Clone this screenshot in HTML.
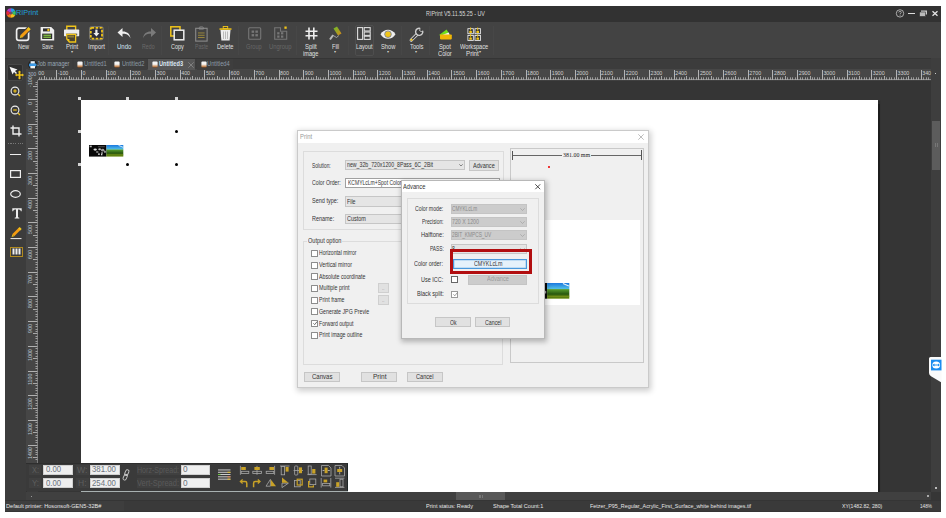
<!DOCTYPE html><html><head><meta charset="utf-8"><style>
html,body{margin:0;padding:0;}
body{width:946px;height:518px;overflow:hidden;background:#fff;position:relative;font-family:"Liberation Sans",sans-serif;}
.t{position:absolute;white-space:nowrap;line-height:1;transform-origin:0 0;}
div{box-sizing:border-box;}
svg{position:absolute;overflow:visible;}
</style></head><body>
<div style="position:absolute;left:5px;top:6px;width:936px;height:506px;background:#3b3b3b;"></div>
<div style="position:absolute;left:5px;top:6px;width:936px;height:15.5px;background:#323232;"></div>
<div style="position:absolute;left:5px;top:21.5px;width:936px;height:37px;background:#434343;"></div>
<div style="position:absolute;left:5px;top:58px;width:936px;height:1px;background:#353535;"></div>
<div style="position:absolute;left:5px;top:59px;width:936px;height:10.3px;background:#3c3c3c;"></div>
<div style="position:absolute;left:5px;top:59px;width:21px;height:441px;background:#3c3c3c;"></div>
<div style="position:absolute;left:25.5px;top:69px;width:1px;height:423px;background:#333;"></div>
<div style="position:absolute;left:38px;top:80px;width:893px;height:412px;background:#353535;"></div>
<div style="position:absolute;left:26px;top:69.3px;width:906px;height:10.7px;background:#474747;"></div>
<div style="position:absolute;left:26.3px;top:69.3px;width:11.7px;height:394px;background:#464646;"></div>
<div style="position:absolute;left:81px;top:100px;width:796.6px;height:392px;background:#fff;box-shadow:1.5px 1px 1px #1c1c1c;"></div>
<div style="position:absolute;left:931px;top:58px;width:10px;height:442px;background:#3e3e3e;"></div>
<div style="position:absolute;left:932px;top:121px;width:8px;height:49px;background:#5c5c5c;"></div>
<div style="position:absolute;left:26px;top:492px;width:905px;height:8px;background:#404040;"></div>
<div style="position:absolute;left:456px;top:492px;width:49px;height:8px;background:#585858;"></div>
<div style="position:absolute;left:478.6px;top:494.6px;width:0.8px;height:3.6px;background:#777;"></div>
<div style="position:absolute;left:480.4px;top:494.6px;width:0.8px;height:3.6px;background:#777;"></div>
<div style="position:absolute;left:482.2px;top:494.6px;width:0.8px;height:3.6px;background:#777;"></div>
<div style="position:absolute;left:5px;top:500px;width:936px;height:11.6px;background:#3a3a3a;border-top:1px solid #353535;border-bottom:1px solid #353535;"></div>
<div style="position:absolute;left:5px;top:501px;width:119px;height:9.6px;background:#3e3e3e;"></div>
<svg style="left:5.5px;top:7.8px" width="10" height="10" viewBox="0 0 10 10"><g transform="translate(5 5)">
<path d="M0 0 L0 -4.8 A4.8 4.8 0 0 1 4.16 -2.4 Z" fill="#2d9be8"/>
<path d="M0 0 L4.16 -2.4 A4.8 4.8 0 0 1 4.16 2.4 Z" fill="#37c06a"/>
<path d="M0 0 L4.16 2.4 A4.8 4.8 0 0 1 0 4.8 Z" fill="#f4c21b"/>
<path d="M0 0 L0 4.8 A4.8 4.8 0 0 1 -4.16 2.4 Z" fill="#f07a1a"/>
<path d="M0 0 L-4.16 2.4 A4.8 4.8 0 0 1 -4.16 -2.4 Z" fill="#e8283c"/>
<path d="M0 0 L-4.16 -2.4 A4.8 4.8 0 0 1 0 -4.8 Z" fill="#b43cc8"/>
<circle r="1.5" fill="#6a4a6a"/></g></svg>
<div class="t" style="left:16.30px;top:10.09px;font-size:6.55px;color:#22a0dc;font-weight:normal;font-family:'Liberation Sans',sans-serif;transform:scaleX(1.114);">RIPrint</div>
<div class="t" style="left:426.00px;top:9.67px;font-size:7.01px;color:#d8d8d8;font-weight:normal;font-family:'Liberation Sans',sans-serif;transform:scaleX(0.770);">RIPrint V5.11.55.25 - UV</div>
<svg style="left:895px;top:9px" width="10" height="10" viewBox="0 0 10 10"><circle cx="5" cy="4.4" r="3.7" fill="none" stroke="#c8c8c8" stroke-width="0.8"/><path d="M3.7 3.5 Q3.8 2.3 5 2.3 Q6.3 2.3 6.3 3.4 Q6.3 4.2 5.1 4.7 V5.4" fill="none" stroke="#c8c8c8" stroke-width="0.7"/><rect x="4.7" y="5.9" width="0.8" height="0.8" fill="#c8c8c8"/></svg>
<div style="position:absolute;left:908.2px;top:13px;width:7.2px;height:1.4px;background:#ddd;"></div>
<svg style="left:919px;top:10px" width="9" height="7" viewBox="0 0 9 7"><rect x="2" y="0.5" width="6" height="4" fill="#ccc"/><rect x="0.5" y="2" width="6" height="4.5" fill="#bbb" stroke="#2c2c2c" stroke-width="0.6"/></svg>
<svg style="left:932px;top:11px" width="6" height="5" viewBox="0 0 6 5"><path d="M0.5 0.3 L5.5 4.7 M5.5 0.3 L0.5 4.7" stroke="#e6e6e6" stroke-width="1.3"/></svg>
<div style="position:absolute;left:107.5px;top:26px;width:1px;height:29px;background:#474747;"></div>
<div style="position:absolute;left:160.5px;top:26px;width:1px;height:29px;background:#474747;"></div>
<div style="position:absolute;left:237.5px;top:26px;width:1px;height:29px;background:#474747;"></div>
<div style="position:absolute;left:295.5px;top:26px;width:1px;height:29px;background:#474747;"></div>
<div style="position:absolute;left:347.5px;top:26px;width:1px;height:29px;background:#474747;"></div>
<div style="position:absolute;left:400.5px;top:26px;width:1px;height:29px;background:#474747;"></div>
<div style="position:absolute;left:428.5px;top:26px;width:1px;height:29px;background:#474747;"></div>
<div style="position:absolute;left:492.5px;top:26px;width:1px;height:29px;background:#474747;"></div>
<svg style="left:15px;top:26px" width="17" height="16" viewBox="0 0 17 16"><rect x="1.6" y="2.2" width="12" height="12.2" rx="2.4" fill="#3a3a3a" stroke="#eeeeee" stroke-width="1.7"/><path d="M6.2 10.6 L14.2 2.6" stroke="#3d3d3d" stroke-width="5"/><path d="M6.4 10.4 L13.6 3.2" stroke="#f39c12" stroke-width="3"/><path d="M12.6 2 L14.8 4.2" stroke="#f0c419" stroke-width="2.6"/><path d="M4.8 12 L5.6 9.2 L7.6 11.2 Z" fill="#f0c419"/></svg>
<div class="t" style="left:17.50px;top:43.07px;font-size:7.01px;color:#e0e0e0;font-weight:normal;font-family:'Liberation Sans',sans-serif;transform:scaleX(0.792);">New</div>
<svg style="left:40px;top:26px" width="15" height="15" viewBox="0 0 15 15"><path d="M0.6 1 H11.2 L14.2 4 V14.6 H0.6 Z" fill="#eeeeee"/><rect x="3" y="2.4" width="7" height="3" fill="#2e2e2e"/><circle cx="8.4" cy="3.9" r="1.2" fill="#f2c21b"/><rect x="2.2" y="7.6" width="10" height="5.4" fill="#2e2e2e"/><rect x="3.4" y="8.6" width="7.6" height="1.5" fill="#7cb342"/><rect x="3.4" y="10.6" width="7.6" height="1.5" fill="#7cb342"/></svg>
<div class="t" style="left:41.60px;top:43.07px;font-size:7.01px;color:#e0e0e0;font-weight:normal;font-family:'Liberation Sans',sans-serif;transform:scaleX(0.707);">Save</div>
<svg style="left:63px;top:25px" width="17" height="18" viewBox="0 0 17 18"><path d="M3.8 5 V1.2 H12.6 V5" fill="none" stroke="#f0c419" stroke-width="1.4"/><rect x="1" y="4.6" width="15.2" height="6.6" rx="0.6" fill="#eeeeee"/><rect x="3.2" y="8.6" width="11" height="1.8" fill="#555"/><path d="M3.8 9.4 H12.6 V17 H6.4 L3.8 14 Z" fill="#4a4430" stroke="#f0c419" stroke-width="1.3"/><path d="M3.8 14 L6.4 17 V14 Z" fill="#f0c419"/><rect x="5" y="10.5" width="6" height="2" fill="#8a7a3a"/></svg>
<div class="t" style="left:65.60px;top:43.07px;font-size:7.01px;color:#e0e0e0;font-weight:normal;font-family:'Liberation Sans',sans-serif;transform:scaleX(0.846);">Print</div>
<div class="t" style="left:70.50px;top:50.25px;font-size:3.95px;color:#ccc;font-weight:normal;font-family:'Liberation Sans',sans-serif;transform:scaleX(1.013);">▾</div>
<svg style="left:88.5px;top:25.8px" width="15" height="14.5" viewBox="0 0 15 14.5"><rect x="0.6" y="0.6" width="13.6" height="13.2" rx="1.8" fill="#3a3a3a" stroke="#9a9a9a" stroke-width="0.6"/><rect x="1.8" y="1.8" width="11.2" height="10.8" rx="0.8" fill="#2c2c3a" stroke="#f0c419" stroke-width="1.8" stroke-dasharray="2.6 1.4"/><path d="M7.4 3.6 V8.2" stroke="#eeeeee" stroke-width="2.2"/><path d="M4.4 7 L7.4 10.4 L10.4 7 Z" fill="#eeeeee"/></svg>
<div class="t" style="left:87.80px;top:43.07px;font-size:7.01px;color:#e0e0e0;font-weight:normal;font-family:'Liberation Sans',sans-serif;transform:scaleX(0.851);">Import</div>
<svg style="left:117px;top:27px" width="15" height="12" viewBox="0 0 15 12"><path d="M13.5 11.5 C13 6 9 4.2 5.5 4.5 V1 L0.5 5.5 L5.5 10 V6.8 C8.5 6.5 12 7.5 13.5 11.5 Z" fill="#eeeeee"/></svg>
<div class="t" style="left:116.70px;top:42.97px;font-size:7.01px;color:#d6e6f5;font-weight:normal;font-family:'Liberation Sans',sans-serif;transform:scaleX(0.859);">Undo</div>
<svg style="left:141.5px;top:27px" width="15" height="12" viewBox="0 0 15 12"><path d="M1 11.5 C1.5 6 5.5 4.2 9 4.5 V1 L14 5.5 L9 10 V6.8 C6 6.5 2.5 7.5 1 11.5 Z" fill="#7a7a7a"/></svg>
<div class="t" style="left:142.10px;top:42.97px;font-size:7.01px;color:#6a6a6a;font-weight:normal;font-family:'Liberation Sans',sans-serif;transform:scaleX(0.752);">Redo</div>
<svg style="left:170px;top:26px" width="15" height="15" viewBox="0 0 15 15"><rect x="0.8" y="0.8" width="9.2" height="9.2" fill="none" stroke="#f0c419" stroke-width="1.5"/><rect x="4.2" y="4.2" width="9.6" height="9.6" fill="#3a3a3a" stroke="#eeeeee" stroke-width="1.5"/></svg>
<div class="t" style="left:170.70px;top:42.97px;font-size:7.01px;color:#e0e0e0;font-weight:normal;font-family:'Liberation Sans',sans-serif;transform:scaleX(0.788);">Copy</div>
<svg style="left:195px;top:26px" width="13" height="16" viewBox="0 0 13 16"><rect x="0.7" y="2.3" width="11.4" height="12.8" fill="none" stroke="#8a8a8a" stroke-width="1.1"/><path d="M4 3 V1.8 C4 0.6 8.6 0.6 8.6 1.8 V3 Z" fill="none" stroke="#8a8a8a" stroke-width="1"/><rect x="3" y="6.5" width="6.6" height="0.9" fill="#a08c3c"/><rect x="3" y="8.8" width="6.6" height="0.9" fill="#a08c3c"/><rect x="3" y="11.1" width="6.6" height="0.9" fill="#a08c3c"/></svg>
<div class="t" style="left:194.60px;top:42.97px;font-size:7.01px;color:#6a6a6a;font-weight:normal;font-family:'Liberation Sans',sans-serif;transform:scaleX(0.736);">Paste</div>
<svg style="left:219px;top:26px" width="13" height="15" viewBox="0 0 13 15"><rect x="0.5" y="2.3" width="12" height="1.5" fill="#f0c419"/><rect x="4.2" y="0.5" width="4.5" height="2" fill="none" stroke="#f0c419" stroke-width="0.9"/><path d="M1.5 4 H11.5 L10.6 14.5 H2.4 Z" fill="#eeeeee"/><path d="M4.5 5.5 V13 M6.5 5.5 V13 M8.5 5.5 V13" stroke="#999" stroke-width="0.6"/></svg>
<div class="t" style="left:217.00px;top:42.97px;font-size:7.01px;color:#e0e0e0;font-weight:normal;font-family:'Liberation Sans',sans-serif;transform:scaleX(0.814);">Delete</div>
<svg style="left:247.5px;top:27px" width="14" height="13" viewBox="0 0 14 13"><rect x="0.7" y="0.7" width="12" height="11.5" rx="1" fill="none" stroke="#777" stroke-width="1.1"/><rect x="3.6" y="3.5" width="2.5" height="2.3" fill="#777"/><rect x="7.4" y="3.5" width="2.5" height="2.3" fill="#777"/><rect x="3.6" y="7.1" width="2.5" height="2.3" fill="#777"/><rect x="7.4" y="7.1" width="2.5" height="2.3" fill="#777"/></svg>
<div class="t" style="left:246.20px;top:42.97px;font-size:7.01px;color:#686868;font-weight:normal;font-family:'Liberation Sans',sans-serif;transform:scaleX(0.806);">Group</div>
<svg style="left:273.5px;top:26px" width="14" height="14" viewBox="0 0 14 14"><path d="M0.7 1.7 H6.5 V5.2 H12.7 V13.2 H0.7 Z" fill="none" stroke="#777" stroke-width="1.1"/><rect x="10.4" y="0.5" width="2.3" height="2.3" fill="#f0c419"/><rect x="3.2" y="6.2" width="2.3" height="2.2" fill="#777"/><rect x="7" y="6.2" width="2.3" height="2.2" fill="#777"/><rect x="3.2" y="9.5" width="2.3" height="2.2" fill="#777"/><rect x="7" y="9.5" width="2.3" height="2.2" fill="#777"/></svg>
<div class="t" style="left:269.20px;top:42.97px;font-size:7.01px;color:#686868;font-weight:normal;font-family:'Liberation Sans',sans-serif;transform:scaleX(0.841);">Ungroup</div>
<svg style="left:304.5px;top:27px" width="13" height="13" viewBox="0 0 13 13"><path d="M4 0.5 V12.5 M8.8 0.5 V12.5 M0.5 4.2 H12.5 M0.5 8.8 H12.5" stroke="#eeeeee" stroke-width="1.6"/></svg>
<div class="t" style="left:304.90px;top:42.77px;font-size:7.01px;color:#e0e0e0;font-weight:normal;font-family:'Liberation Sans',sans-serif;transform:scaleX(0.858);">Split</div>
<div class="t" style="left:302.80px;top:49.97px;font-size:7.01px;color:#e0e0e0;font-weight:normal;font-family:'Liberation Sans',sans-serif;transform:scaleX(0.807);">image</div>
<svg style="left:329px;top:26px" width="13" height="15" viewBox="0 0 13 15"><defs><linearGradient id="fg" x1="0" y1="0" x2="1" y2="1"><stop offset="0" stop-color="#6abf2a"/><stop offset="1" stop-color="#d9861a"/></linearGradient></defs><path d="M4.5 2.5 L8 0.5 L12.5 7.5 L9 9.5 Z" fill="url(#fg)"/><path d="M9.8 9.6 L7.5 11.5 L3.5 9" stroke="#aaa" stroke-width="0.9" fill="none"/><path d="M4 9.2 L1 13.5" stroke="#bbb" stroke-width="2"/></svg>
<div class="t" style="left:331.70px;top:42.77px;font-size:7.01px;color:#e0e0e0;font-weight:normal;font-family:'Liberation Sans',sans-serif;transform:scaleX(0.793);">Fill</div>
<div class="t" style="left:333.50px;top:50.45px;font-size:3.95px;color:#ccc;font-weight:normal;font-family:'Liberation Sans',sans-serif;transform:scaleX(1.013);">▾</div>
<div style="position:absolute;left:354.5px;top:25px;width:19.5px;height:30.5px;border:1px solid #4e4e4e;border-radius:2px;"></div>
<svg style="left:357px;top:27px" width="14" height="13" viewBox="0 0 14 13"><rect x="0.6" y="0.6" width="5" height="11.8" fill="none" stroke="#ddd" stroke-width="1.1"/><rect x="7.2" y="0.6" width="6" height="3.4" fill="none" stroke="#ddd" stroke-width="1.1"/><rect x="7.2" y="5" width="6" height="3.4" fill="none" stroke="#ddd" stroke-width="1.1"/><rect x="7.2" y="9.2" width="6" height="3.2" fill="none" stroke="#ddd" stroke-width="1.1"/></svg>
<div class="t" style="left:356.00px;top:42.87px;font-size:7.01px;color:#e0e0e0;font-weight:normal;font-family:'Liberation Sans',sans-serif;transform:scaleX(0.784);">Layout</div>
<svg style="left:380px;top:28.5px" width="16" height="10.5" viewBox="0 0 16 10.5"><path d="M0.5 5.2 C4 -0.8 12 -0.8 15.5 5.2 C12 11.2 4 11.2 0.5 5.2 Z" fill="#eeeeee"/><circle cx="8" cy="5.2" r="2.8" fill="#f0c419"/><circle cx="8" cy="5.2" r="3.3" fill="none" stroke="#444" stroke-width="0.6"/></svg>
<div class="t" style="left:380.90px;top:42.87px;font-size:7.01px;color:#e0e0e0;font-weight:normal;font-family:'Liberation Sans',sans-serif;transform:scaleX(0.816);">Show</div>
<div class="t" style="left:386.50px;top:50.45px;font-size:3.95px;color:#ccc;font-weight:normal;font-family:'Liberation Sans',sans-serif;transform:scaleX(1.013);">▾</div>
<svg style="left:409px;top:26.5px" width="15" height="15" viewBox="0 0 15 15"><path d="M2.2 13.2 L8.4 7" stroke="#cfcfcf" stroke-width="3.2" stroke-linecap="round"/><path d="M2.2 13.2 L8.4 7" stroke="#3a3a3a" stroke-width="1.4" stroke-linecap="round"/><path d="M13.68 3.87 A3.6 3.6 0 1 1 11.13 1.32" fill="#3a3a3a" stroke="#cfcfcf" stroke-width="1.4"/><path d="M11.13 1.32 L10.6 3.6 L12.2 4.6 L13.68 3.87" fill="#3a3a3a" stroke="#cfcfcf" stroke-width="0.9"/><circle cx="2.6" cy="12.8" r="1.1" fill="#f0c419"/></svg>
<div class="t" style="left:409.50px;top:42.87px;font-size:7.01px;color:#e0e0e0;font-weight:normal;font-family:'Liberation Sans',sans-serif;transform:scaleX(0.825);">Tools</div>
<div class="t" style="left:414.50px;top:50.45px;font-size:3.95px;color:#ccc;font-weight:normal;font-family:'Liberation Sans',sans-serif;transform:scaleX(1.013);">▾</div>
<svg style="left:438px;top:27.5px" width="14" height="12" viewBox="0 0 14 12"><path d="M0.8 7.2 L8.6 1.6 L11.4 6 Z" fill="#72e01a"/><path d="M1.6 8 L10.8 4.4 L12 8 Z" fill="#f6f6f6"/><rect x="2" y="6.4" width="11.8" height="5" rx="0.8" fill="#f2b705"/></svg>
<div class="t" style="left:438.80px;top:42.87px;font-size:7.01px;color:#e0e0e0;font-weight:normal;font-family:'Liberation Sans',sans-serif;transform:scaleX(0.825);">Spot</div>
<div class="t" style="left:438.00px;top:49.97px;font-size:7.01px;color:#e0e0e0;font-weight:normal;font-family:'Liberation Sans',sans-serif;transform:scaleX(0.824);">Color</div>
<svg style="left:466.6px;top:26.8px" width="14" height="14" viewBox="0 0 14 14"><rect x="0.9" y="1.7" width="5.4" height="5" fill="#2e2e2e" stroke="#eee" stroke-width="0.9"/><path d="M2.3 6.1 V4.1 Q3.6 2.9 4.9 4.1 V6.1 Z" fill="#f0c419"/><rect x="3.1" y="0.5" width="1" height="2.6" fill="#f0c419"/><rect x="8.0" y="1.7" width="5.4" height="5" fill="#2e2e2e" stroke="#eee" stroke-width="0.9"/><path d="M9.4 6.1 V4.1 Q10.7 2.9 12.0 4.1 V6.1 Z" fill="#f0c419"/><rect x="10.2" y="0.5" width="1" height="2.6" fill="#f0c419"/><rect x="0.9" y="8.4" width="5.4" height="5" fill="#2e2e2e" stroke="#eee" stroke-width="0.9"/><path d="M2.3 12.8 V10.8 Q3.6 9.6 4.9 10.8 V12.8 Z" fill="#f0c419"/><rect x="3.1" y="7.2" width="1" height="2.6" fill="#f0c419"/><rect x="8.0" y="8.4" width="5.4" height="5" fill="#2e2e2e" stroke="#eee" stroke-width="0.9"/><path d="M9.4 12.8 V10.8 Q10.7 9.6 12.0 10.8 V12.8 Z" fill="#f0c419"/><rect x="10.2" y="7.2" width="1" height="2.6" fill="#f0c419"/></svg>
<div class="t" style="left:459.70px;top:42.87px;font-size:7.01px;color:#e0e0e0;font-weight:normal;font-family:'Liberation Sans',sans-serif;transform:scaleX(0.810);">Workspace</div>
<div class="t" style="left:465.70px;top:49.97px;font-size:7.01px;color:#e0e0e0;font-weight:normal;font-family:'Liberation Sans',sans-serif;transform:scaleX(0.888);">Print</div>
<div class="t" style="left:479.00px;top:50.45px;font-size:3.95px;color:#ccc;font-weight:normal;font-family:'Liberation Sans',sans-serif;transform:scaleX(1.013);">▾</div>
<div style="position:absolute;left:27.5px;top:59px;width:44px;height:10.5px;background:#3e3e3e;"></div>
<svg style="left:28px;top:59.5px" width="9.5" height="9.5" viewBox="0 0 9.5 9.5"><circle cx="4.7" cy="4.7" r="4.6" fill="#222"/><rect x="2.6" y="1.2" width="4.2" height="2.6" fill="#e8f0f8"/><rect x="1" y="3.4" width="7.4" height="3.2" rx="0.8" fill="#3a9ae8"/><rect x="2.4" y="6" width="4.6" height="2.4" fill="#f4f4f4"/></svg>
<div class="t" style="left:37.30px;top:61.08px;font-size:6.78px;color:#9aa8b4;font-weight:normal;font-family:'Liberation Sans',sans-serif;transform:scaleX(0.821);">Job manager</div>
<div style="position:absolute;left:74px;top:59px;width:35.6px;height:10.5px;background:#3e3e3e;"></div>
<svg style="left:76.5px;top:61px" width="6" height="7" viewBox="0 0 6 7"><defs><linearGradient id="tg" x1="0" y1="0" x2="0" y2="1"><stop offset="0.45" stop-color="#f4f4f4"/><stop offset="0.75" stop-color="#d8a070"/><stop offset="1" stop-color="#8a4a1a"/></linearGradient></defs><rect x="0.4" y="0.4" width="5.2" height="6.2" rx="1" fill="url(#tg)"/></svg>
<div class="t" style="left:83.80px;top:61.08px;font-size:6.78px;color:#8d9aa5;font-weight:normal;font-family:'Liberation Sans',sans-serif;transform:scaleX(0.852);">Untitled1</div>
<div style="position:absolute;left:111.9px;top:59px;width:35px;height:10.5px;background:#3e3e3e;"></div>
<svg style="left:114px;top:61px" width="6" height="7" viewBox="0 0 6 7"><defs><linearGradient id="tg" x1="0" y1="0" x2="0" y2="1"><stop offset="0.45" stop-color="#f4f4f4"/><stop offset="0.75" stop-color="#d8a070"/><stop offset="1" stop-color="#8a4a1a"/></linearGradient></defs><rect x="0.4" y="0.4" width="5.2" height="6.2" rx="1" fill="url(#tg)"/></svg>
<div class="t" style="left:121.80px;top:61.08px;font-size:6.78px;color:#8d9aa5;font-weight:normal;font-family:'Liberation Sans',sans-serif;transform:scaleX(0.837);">Untitled2</div>
<div style="position:absolute;left:148.4px;top:59px;width:46.5px;height:10.5px;background:#575757;"></div>
<svg style="left:151.5px;top:61px" width="6" height="7" viewBox="0 0 6 7"><defs><linearGradient id="tg" x1="0" y1="0" x2="0" y2="1"><stop offset="0.45" stop-color="#f4f4f4"/><stop offset="0.75" stop-color="#d8a070"/><stop offset="1" stop-color="#8a4a1a"/></linearGradient></defs><rect x="0.4" y="0.4" width="5.2" height="6.2" rx="1" fill="url(#tg)"/></svg>
<div class="t" style="left:158.60px;top:61.08px;font-size:6.78px;color:#dce8f4;font-weight:bold;font-family:'Liberation Sans',sans-serif;transform:scaleX(0.831);">Untitled3</div>
<svg style="left:187.5px;top:61.5px" width="6" height="6" viewBox="0 0 6 6"><path d="M0.3 0.3 L5.7 5.7 M5.7 0.3 L0.3 5.7" stroke="#8a8a8a" stroke-width="0.8"/></svg>
<div style="position:absolute;left:196.6px;top:59px;width:36.2px;height:10.5px;background:#3e3e3e;"></div>
<svg style="left:200.5px;top:61px" width="6" height="7" viewBox="0 0 6 7"><defs><linearGradient id="tg" x1="0" y1="0" x2="0" y2="1"><stop offset="0.45" stop-color="#f4f4f4"/><stop offset="0.75" stop-color="#d8a070"/><stop offset="1" stop-color="#8a4a1a"/></linearGradient></defs><rect x="0.4" y="0.4" width="5.2" height="6.2" rx="1" fill="url(#tg)"/></svg>
<div class="t" style="left:206.90px;top:61.08px;font-size:6.78px;color:#8d9aa5;font-weight:normal;font-family:'Liberation Sans',sans-serif;transform:scaleX(0.852);">Untitled4</div>
<svg style="left:0;top:0" width="946" height="100"><rect x="39" y="77.3" width="1" height="2.7" fill="#9c9c9c"/><rect x="41" y="77.3" width="1" height="2.7" fill="#9c9c9c"/><rect x="44" y="76" width="1" height="4" fill="#a8a8a8"/><rect x="46" y="77.3" width="1" height="2.7" fill="#9c9c9c"/><rect x="49" y="77.3" width="1" height="2.7" fill="#9c9c9c"/><rect x="51" y="77.3" width="1" height="2.7" fill="#9c9c9c"/><rect x="54" y="77.3" width="1" height="2.7" fill="#9c9c9c"/><rect x="56" y="70" width="1" height="10" fill="#b4b4b4"/><rect x="59" y="77.3" width="1" height="2.7" fill="#9c9c9c"/><rect x="61" y="77.3" width="1" height="2.7" fill="#9c9c9c"/><rect x="64" y="77.3" width="1" height="2.7" fill="#9c9c9c"/><rect x="66" y="77.3" width="1" height="2.7" fill="#9c9c9c"/><rect x="69" y="76" width="1" height="4" fill="#a8a8a8"/><rect x="71" y="77.3" width="1" height="2.7" fill="#9c9c9c"/><rect x="73" y="77.3" width="1" height="2.7" fill="#9c9c9c"/><rect x="76" y="77.3" width="1" height="2.7" fill="#9c9c9c"/><rect x="78" y="77.3" width="1" height="2.7" fill="#9c9c9c"/><rect x="81" y="70" width="1" height="10" fill="#b4b4b4"/><rect x="83" y="77.3" width="1" height="2.7" fill="#9c9c9c"/><rect x="86" y="77.3" width="1" height="2.7" fill="#9c9c9c"/><rect x="88" y="77.3" width="1" height="2.7" fill="#9c9c9c"/><rect x="91" y="77.3" width="1" height="2.7" fill="#9c9c9c"/><rect x="93" y="76" width="1" height="4" fill="#a8a8a8"/><rect x="96" y="77.3" width="1" height="2.7" fill="#9c9c9c"/><rect x="98" y="77.3" width="1" height="2.7" fill="#9c9c9c"/><rect x="101" y="77.3" width="1" height="2.7" fill="#9c9c9c"/><rect x="103" y="77.3" width="1" height="2.7" fill="#9c9c9c"/><rect x="106" y="70" width="1" height="10" fill="#b4b4b4"/><rect x="108" y="77.3" width="1" height="2.7" fill="#9c9c9c"/><rect x="111" y="77.3" width="1" height="2.7" fill="#9c9c9c"/><rect x="113" y="77.3" width="1" height="2.7" fill="#9c9c9c"/><rect x="115" y="77.3" width="1" height="2.7" fill="#9c9c9c"/><rect x="118" y="76" width="1" height="4" fill="#a8a8a8"/><rect x="120" y="77.3" width="1" height="2.7" fill="#9c9c9c"/><rect x="123" y="77.3" width="1" height="2.7" fill="#9c9c9c"/><rect x="125" y="77.3" width="1" height="2.7" fill="#9c9c9c"/><rect x="128" y="77.3" width="1" height="2.7" fill="#9c9c9c"/><rect x="130" y="70" width="1" height="10" fill="#b4b4b4"/><rect x="133" y="77.3" width="1" height="2.7" fill="#9c9c9c"/><rect x="135" y="77.3" width="1" height="2.7" fill="#9c9c9c"/><rect x="138" y="77.3" width="1" height="2.7" fill="#9c9c9c"/><rect x="140" y="77.3" width="1" height="2.7" fill="#9c9c9c"/><rect x="143" y="76" width="1" height="4" fill="#a8a8a8"/><rect x="145" y="77.3" width="1" height="2.7" fill="#9c9c9c"/><rect x="148" y="77.3" width="1" height="2.7" fill="#9c9c9c"/><rect x="150" y="77.3" width="1" height="2.7" fill="#9c9c9c"/><rect x="153" y="77.3" width="1" height="2.7" fill="#9c9c9c"/><rect x="155" y="70" width="1" height="10" fill="#b4b4b4"/><rect x="157" y="77.3" width="1" height="2.7" fill="#9c9c9c"/><rect x="160" y="77.3" width="1" height="2.7" fill="#9c9c9c"/><rect x="162" y="77.3" width="1" height="2.7" fill="#9c9c9c"/><rect x="165" y="77.3" width="1" height="2.7" fill="#9c9c9c"/><rect x="167" y="76" width="1" height="4" fill="#a8a8a8"/><rect x="170" y="77.3" width="1" height="2.7" fill="#9c9c9c"/><rect x="172" y="77.3" width="1" height="2.7" fill="#9c9c9c"/><rect x="175" y="77.3" width="1" height="2.7" fill="#9c9c9c"/><rect x="177" y="77.3" width="1" height="2.7" fill="#9c9c9c"/><rect x="180" y="70" width="1" height="10" fill="#b4b4b4"/><rect x="182" y="77.3" width="1" height="2.7" fill="#9c9c9c"/><rect x="185" y="77.3" width="1" height="2.7" fill="#9c9c9c"/><rect x="187" y="77.3" width="1" height="2.7" fill="#9c9c9c"/><rect x="190" y="77.3" width="1" height="2.7" fill="#9c9c9c"/><rect x="192" y="76" width="1" height="4" fill="#a8a8a8"/><rect x="195" y="77.3" width="1" height="2.7" fill="#9c9c9c"/><rect x="197" y="77.3" width="1" height="2.7" fill="#9c9c9c"/><rect x="199" y="77.3" width="1" height="2.7" fill="#9c9c9c"/><rect x="202" y="77.3" width="1" height="2.7" fill="#9c9c9c"/><rect x="204" y="70" width="1" height="10" fill="#b4b4b4"/><rect x="207" y="77.3" width="1" height="2.7" fill="#9c9c9c"/><rect x="209" y="77.3" width="1" height="2.7" fill="#9c9c9c"/><rect x="212" y="77.3" width="1" height="2.7" fill="#9c9c9c"/><rect x="214" y="77.3" width="1" height="2.7" fill="#9c9c9c"/><rect x="217" y="76" width="1" height="4" fill="#a8a8a8"/><rect x="219" y="77.3" width="1" height="2.7" fill="#9c9c9c"/><rect x="222" y="77.3" width="1" height="2.7" fill="#9c9c9c"/><rect x="224" y="77.3" width="1" height="2.7" fill="#9c9c9c"/><rect x="227" y="77.3" width="1" height="2.7" fill="#9c9c9c"/><rect x="229" y="70" width="1" height="10" fill="#b4b4b4"/><rect x="232" y="77.3" width="1" height="2.7" fill="#9c9c9c"/><rect x="234" y="77.3" width="1" height="2.7" fill="#9c9c9c"/><rect x="237" y="77.3" width="1" height="2.7" fill="#9c9c9c"/><rect x="239" y="77.3" width="1" height="2.7" fill="#9c9c9c"/><rect x="241" y="76" width="1" height="4" fill="#a8a8a8"/><rect x="244" y="77.3" width="1" height="2.7" fill="#9c9c9c"/><rect x="246" y="77.3" width="1" height="2.7" fill="#9c9c9c"/><rect x="249" y="77.3" width="1" height="2.7" fill="#9c9c9c"/><rect x="251" y="77.3" width="1" height="2.7" fill="#9c9c9c"/><rect x="254" y="70" width="1" height="10" fill="#b4b4b4"/><rect x="256" y="77.3" width="1" height="2.7" fill="#9c9c9c"/><rect x="259" y="77.3" width="1" height="2.7" fill="#9c9c9c"/><rect x="261" y="77.3" width="1" height="2.7" fill="#9c9c9c"/><rect x="264" y="77.3" width="1" height="2.7" fill="#9c9c9c"/><rect x="266" y="76" width="1" height="4" fill="#a8a8a8"/><rect x="269" y="77.3" width="1" height="2.7" fill="#9c9c9c"/><rect x="271" y="77.3" width="1" height="2.7" fill="#9c9c9c"/><rect x="274" y="77.3" width="1" height="2.7" fill="#9c9c9c"/><rect x="276" y="77.3" width="1" height="2.7" fill="#9c9c9c"/><rect x="279" y="70" width="1" height="10" fill="#b4b4b4"/><rect x="281" y="77.3" width="1" height="2.7" fill="#9c9c9c"/><rect x="283" y="77.3" width="1" height="2.7" fill="#9c9c9c"/><rect x="286" y="77.3" width="1" height="2.7" fill="#9c9c9c"/><rect x="288" y="77.3" width="1" height="2.7" fill="#9c9c9c"/><rect x="291" y="76" width="1" height="4" fill="#a8a8a8"/><rect x="293" y="77.3" width="1" height="2.7" fill="#9c9c9c"/><rect x="296" y="77.3" width="1" height="2.7" fill="#9c9c9c"/><rect x="298" y="77.3" width="1" height="2.7" fill="#9c9c9c"/><rect x="301" y="77.3" width="1" height="2.7" fill="#9c9c9c"/><rect x="303" y="70" width="1" height="10" fill="#b4b4b4"/><rect x="306" y="77.3" width="1" height="2.7" fill="#9c9c9c"/><rect x="308" y="77.3" width="1" height="2.7" fill="#9c9c9c"/><rect x="311" y="77.3" width="1" height="2.7" fill="#9c9c9c"/><rect x="313" y="77.3" width="1" height="2.7" fill="#9c9c9c"/><rect x="316" y="76" width="1" height="4" fill="#a8a8a8"/><rect x="318" y="77.3" width="1" height="2.7" fill="#9c9c9c"/><rect x="320" y="77.3" width="1" height="2.7" fill="#9c9c9c"/><rect x="323" y="77.3" width="1" height="2.7" fill="#9c9c9c"/><rect x="325" y="77.3" width="1" height="2.7" fill="#9c9c9c"/><rect x="328" y="70" width="1" height="10" fill="#b4b4b4"/><rect x="330" y="77.3" width="1" height="2.7" fill="#9c9c9c"/><rect x="333" y="77.3" width="1" height="2.7" fill="#9c9c9c"/><rect x="335" y="77.3" width="1" height="2.7" fill="#9c9c9c"/><rect x="338" y="77.3" width="1" height="2.7" fill="#9c9c9c"/><rect x="340" y="76" width="1" height="4" fill="#a8a8a8"/><rect x="343" y="77.3" width="1" height="2.7" fill="#9c9c9c"/><rect x="345" y="77.3" width="1" height="2.7" fill="#9c9c9c"/><rect x="348" y="77.3" width="1" height="2.7" fill="#9c9c9c"/><rect x="350" y="77.3" width="1" height="2.7" fill="#9c9c9c"/><rect x="353" y="70" width="1" height="10" fill="#b4b4b4"/><rect x="355" y="77.3" width="1" height="2.7" fill="#9c9c9c"/><rect x="358" y="77.3" width="1" height="2.7" fill="#9c9c9c"/><rect x="360" y="77.3" width="1" height="2.7" fill="#9c9c9c"/><rect x="362" y="77.3" width="1" height="2.7" fill="#9c9c9c"/><rect x="365" y="76" width="1" height="4" fill="#a8a8a8"/><rect x="367" y="77.3" width="1" height="2.7" fill="#9c9c9c"/><rect x="370" y="77.3" width="1" height="2.7" fill="#9c9c9c"/><rect x="372" y="77.3" width="1" height="2.7" fill="#9c9c9c"/><rect x="375" y="77.3" width="1" height="2.7" fill="#9c9c9c"/><rect x="377" y="70" width="1" height="10" fill="#b4b4b4"/><rect x="380" y="77.3" width="1" height="2.7" fill="#9c9c9c"/><rect x="382" y="77.3" width="1" height="2.7" fill="#9c9c9c"/><rect x="385" y="77.3" width="1" height="2.7" fill="#9c9c9c"/><rect x="387" y="77.3" width="1" height="2.7" fill="#9c9c9c"/><rect x="390" y="76" width="1" height="4" fill="#a8a8a8"/><rect x="392" y="77.3" width="1" height="2.7" fill="#9c9c9c"/><rect x="395" y="77.3" width="1" height="2.7" fill="#9c9c9c"/><rect x="397" y="77.3" width="1" height="2.7" fill="#9c9c9c"/><rect x="400" y="77.3" width="1" height="2.7" fill="#9c9c9c"/><rect x="402" y="70" width="1" height="10" fill="#b4b4b4"/><rect x="404" y="77.3" width="1" height="2.7" fill="#9c9c9c"/><rect x="407" y="77.3" width="1" height="2.7" fill="#9c9c9c"/><rect x="409" y="77.3" width="1" height="2.7" fill="#9c9c9c"/><rect x="412" y="77.3" width="1" height="2.7" fill="#9c9c9c"/><rect x="414" y="76" width="1" height="4" fill="#a8a8a8"/><rect x="417" y="77.3" width="1" height="2.7" fill="#9c9c9c"/><rect x="419" y="77.3" width="1" height="2.7" fill="#9c9c9c"/><rect x="422" y="77.3" width="1" height="2.7" fill="#9c9c9c"/><rect x="424" y="77.3" width="1" height="2.7" fill="#9c9c9c"/><rect x="427" y="70" width="1" height="10" fill="#b4b4b4"/><rect x="429" y="77.3" width="1" height="2.7" fill="#9c9c9c"/><rect x="432" y="77.3" width="1" height="2.7" fill="#9c9c9c"/><rect x="434" y="77.3" width="1" height="2.7" fill="#9c9c9c"/><rect x="437" y="77.3" width="1" height="2.7" fill="#9c9c9c"/><rect x="439" y="76" width="1" height="4" fill="#a8a8a8"/><rect x="442" y="77.3" width="1" height="2.7" fill="#9c9c9c"/><rect x="444" y="77.3" width="1" height="2.7" fill="#9c9c9c"/><rect x="446" y="77.3" width="1" height="2.7" fill="#9c9c9c"/><rect x="449" y="77.3" width="1" height="2.7" fill="#9c9c9c"/><rect x="451" y="70" width="1" height="10" fill="#b4b4b4"/><rect x="454" y="77.3" width="1" height="2.7" fill="#9c9c9c"/><rect x="456" y="77.3" width="1" height="2.7" fill="#9c9c9c"/><rect x="459" y="77.3" width="1" height="2.7" fill="#9c9c9c"/><rect x="461" y="77.3" width="1" height="2.7" fill="#9c9c9c"/><rect x="464" y="76" width="1" height="4" fill="#a8a8a8"/><rect x="466" y="77.3" width="1" height="2.7" fill="#9c9c9c"/><rect x="469" y="77.3" width="1" height="2.7" fill="#9c9c9c"/><rect x="471" y="77.3" width="1" height="2.7" fill="#9c9c9c"/><rect x="474" y="77.3" width="1" height="2.7" fill="#9c9c9c"/><rect x="476" y="70" width="1" height="10" fill="#b4b4b4"/><rect x="479" y="77.3" width="1" height="2.7" fill="#9c9c9c"/><rect x="481" y="77.3" width="1" height="2.7" fill="#9c9c9c"/><rect x="484" y="77.3" width="1" height="2.7" fill="#9c9c9c"/><rect x="486" y="77.3" width="1" height="2.7" fill="#9c9c9c"/><rect x="488" y="76" width="1" height="4" fill="#a8a8a8"/><rect x="491" y="77.3" width="1" height="2.7" fill="#9c9c9c"/><rect x="493" y="77.3" width="1" height="2.7" fill="#9c9c9c"/><rect x="496" y="77.3" width="1" height="2.7" fill="#9c9c9c"/><rect x="498" y="77.3" width="1" height="2.7" fill="#9c9c9c"/><rect x="501" y="70" width="1" height="10" fill="#b4b4b4"/><rect x="503" y="77.3" width="1" height="2.7" fill="#9c9c9c"/><rect x="506" y="77.3" width="1" height="2.7" fill="#9c9c9c"/><rect x="508" y="77.3" width="1" height="2.7" fill="#9c9c9c"/><rect x="511" y="77.3" width="1" height="2.7" fill="#9c9c9c"/><rect x="513" y="76" width="1" height="4" fill="#a8a8a8"/><rect x="516" y="77.3" width="1" height="2.7" fill="#9c9c9c"/><rect x="518" y="77.3" width="1" height="2.7" fill="#9c9c9c"/><rect x="521" y="77.3" width="1" height="2.7" fill="#9c9c9c"/><rect x="523" y="77.3" width="1" height="2.7" fill="#9c9c9c"/><rect x="526" y="70" width="1" height="10" fill="#b4b4b4"/><rect x="528" y="77.3" width="1" height="2.7" fill="#9c9c9c"/><rect x="530" y="77.3" width="1" height="2.7" fill="#9c9c9c"/><rect x="533" y="77.3" width="1" height="2.7" fill="#9c9c9c"/><rect x="535" y="77.3" width="1" height="2.7" fill="#9c9c9c"/><rect x="538" y="76" width="1" height="4" fill="#a8a8a8"/><rect x="540" y="77.3" width="1" height="2.7" fill="#9c9c9c"/><rect x="543" y="77.3" width="1" height="2.7" fill="#9c9c9c"/><rect x="545" y="77.3" width="1" height="2.7" fill="#9c9c9c"/><rect x="548" y="77.3" width="1" height="2.7" fill="#9c9c9c"/><rect x="550" y="70" width="1" height="10" fill="#b4b4b4"/><rect x="553" y="77.3" width="1" height="2.7" fill="#9c9c9c"/><rect x="555" y="77.3" width="1" height="2.7" fill="#9c9c9c"/><rect x="558" y="77.3" width="1" height="2.7" fill="#9c9c9c"/><rect x="560" y="77.3" width="1" height="2.7" fill="#9c9c9c"/><rect x="563" y="76" width="1" height="4" fill="#a8a8a8"/><rect x="565" y="77.3" width="1" height="2.7" fill="#9c9c9c"/><rect x="567" y="77.3" width="1" height="2.7" fill="#9c9c9c"/><rect x="570" y="77.3" width="1" height="2.7" fill="#9c9c9c"/><rect x="572" y="77.3" width="1" height="2.7" fill="#9c9c9c"/><rect x="575" y="70" width="1" height="10" fill="#b4b4b4"/><rect x="577" y="77.3" width="1" height="2.7" fill="#9c9c9c"/><rect x="580" y="77.3" width="1" height="2.7" fill="#9c9c9c"/><rect x="582" y="77.3" width="1" height="2.7" fill="#9c9c9c"/><rect x="585" y="77.3" width="1" height="2.7" fill="#9c9c9c"/><rect x="587" y="76" width="1" height="4" fill="#a8a8a8"/><rect x="590" y="77.3" width="1" height="2.7" fill="#9c9c9c"/><rect x="592" y="77.3" width="1" height="2.7" fill="#9c9c9c"/><rect x="595" y="77.3" width="1" height="2.7" fill="#9c9c9c"/><rect x="597" y="77.3" width="1" height="2.7" fill="#9c9c9c"/><rect x="600" y="70" width="1" height="10" fill="#b4b4b4"/><rect x="602" y="77.3" width="1" height="2.7" fill="#9c9c9c"/><rect x="605" y="77.3" width="1" height="2.7" fill="#9c9c9c"/><rect x="607" y="77.3" width="1" height="2.7" fill="#9c9c9c"/><rect x="609" y="77.3" width="1" height="2.7" fill="#9c9c9c"/><rect x="612" y="76" width="1" height="4" fill="#a8a8a8"/><rect x="614" y="77.3" width="1" height="2.7" fill="#9c9c9c"/><rect x="617" y="77.3" width="1" height="2.7" fill="#9c9c9c"/><rect x="619" y="77.3" width="1" height="2.7" fill="#9c9c9c"/><rect x="622" y="77.3" width="1" height="2.7" fill="#9c9c9c"/><rect x="624" y="70" width="1" height="10" fill="#b4b4b4"/><rect x="627" y="77.3" width="1" height="2.7" fill="#9c9c9c"/><rect x="629" y="77.3" width="1" height="2.7" fill="#9c9c9c"/><rect x="632" y="77.3" width="1" height="2.7" fill="#9c9c9c"/><rect x="634" y="77.3" width="1" height="2.7" fill="#9c9c9c"/><rect x="637" y="76" width="1" height="4" fill="#a8a8a8"/><rect x="639" y="77.3" width="1" height="2.7" fill="#9c9c9c"/><rect x="642" y="77.3" width="1" height="2.7" fill="#9c9c9c"/><rect x="644" y="77.3" width="1" height="2.7" fill="#9c9c9c"/><rect x="647" y="77.3" width="1" height="2.7" fill="#9c9c9c"/><rect x="649" y="70" width="1" height="10" fill="#b4b4b4"/><rect x="651" y="77.3" width="1" height="2.7" fill="#9c9c9c"/><rect x="654" y="77.3" width="1" height="2.7" fill="#9c9c9c"/><rect x="656" y="77.3" width="1" height="2.7" fill="#9c9c9c"/><rect x="659" y="77.3" width="1" height="2.7" fill="#9c9c9c"/><rect x="661" y="76" width="1" height="4" fill="#a8a8a8"/><rect x="664" y="77.3" width="1" height="2.7" fill="#9c9c9c"/><rect x="666" y="77.3" width="1" height="2.7" fill="#9c9c9c"/><rect x="669" y="77.3" width="1" height="2.7" fill="#9c9c9c"/><rect x="671" y="77.3" width="1" height="2.7" fill="#9c9c9c"/><rect x="674" y="70" width="1" height="10" fill="#b4b4b4"/><rect x="676" y="77.3" width="1" height="2.7" fill="#9c9c9c"/><rect x="679" y="77.3" width="1" height="2.7" fill="#9c9c9c"/><rect x="681" y="77.3" width="1" height="2.7" fill="#9c9c9c"/><rect x="684" y="77.3" width="1" height="2.7" fill="#9c9c9c"/><rect x="686" y="76" width="1" height="4" fill="#a8a8a8"/><rect x="689" y="77.3" width="1" height="2.7" fill="#9c9c9c"/><rect x="691" y="77.3" width="1" height="2.7" fill="#9c9c9c"/><rect x="693" y="77.3" width="1" height="2.7" fill="#9c9c9c"/><rect x="696" y="77.3" width="1" height="2.7" fill="#9c9c9c"/><rect x="698" y="70" width="1" height="10" fill="#b4b4b4"/><rect x="701" y="77.3" width="1" height="2.7" fill="#9c9c9c"/><rect x="703" y="77.3" width="1" height="2.7" fill="#9c9c9c"/><rect x="706" y="77.3" width="1" height="2.7" fill="#9c9c9c"/><rect x="708" y="77.3" width="1" height="2.7" fill="#9c9c9c"/><rect x="711" y="76" width="1" height="4" fill="#a8a8a8"/><rect x="713" y="77.3" width="1" height="2.7" fill="#9c9c9c"/><rect x="716" y="77.3" width="1" height="2.7" fill="#9c9c9c"/><rect x="718" y="77.3" width="1" height="2.7" fill="#9c9c9c"/><rect x="721" y="77.3" width="1" height="2.7" fill="#9c9c9c"/><rect x="723" y="70" width="1" height="10" fill="#b4b4b4"/><rect x="726" y="77.3" width="1" height="2.7" fill="#9c9c9c"/><rect x="728" y="77.3" width="1" height="2.7" fill="#9c9c9c"/><rect x="731" y="77.3" width="1" height="2.7" fill="#9c9c9c"/><rect x="733" y="77.3" width="1" height="2.7" fill="#9c9c9c"/><rect x="735" y="76" width="1" height="4" fill="#a8a8a8"/><rect x="738" y="77.3" width="1" height="2.7" fill="#9c9c9c"/><rect x="740" y="77.3" width="1" height="2.7" fill="#9c9c9c"/><rect x="743" y="77.3" width="1" height="2.7" fill="#9c9c9c"/><rect x="745" y="77.3" width="1" height="2.7" fill="#9c9c9c"/><rect x="748" y="70" width="1" height="10" fill="#b4b4b4"/><rect x="750" y="77.3" width="1" height="2.7" fill="#9c9c9c"/><rect x="753" y="77.3" width="1" height="2.7" fill="#9c9c9c"/><rect x="755" y="77.3" width="1" height="2.7" fill="#9c9c9c"/><rect x="758" y="77.3" width="1" height="2.7" fill="#9c9c9c"/><rect x="760" y="76" width="1" height="4" fill="#a8a8a8"/><rect x="763" y="77.3" width="1" height="2.7" fill="#9c9c9c"/><rect x="765" y="77.3" width="1" height="2.7" fill="#9c9c9c"/><rect x="768" y="77.3" width="1" height="2.7" fill="#9c9c9c"/><rect x="770" y="77.3" width="1" height="2.7" fill="#9c9c9c"/><rect x="772" y="70" width="1" height="10" fill="#b4b4b4"/><rect x="775" y="77.3" width="1" height="2.7" fill="#9c9c9c"/><rect x="777" y="77.3" width="1" height="2.7" fill="#9c9c9c"/><rect x="780" y="77.3" width="1" height="2.7" fill="#9c9c9c"/><rect x="782" y="77.3" width="1" height="2.7" fill="#9c9c9c"/><rect x="785" y="76" width="1" height="4" fill="#a8a8a8"/><rect x="787" y="77.3" width="1" height="2.7" fill="#9c9c9c"/><rect x="790" y="77.3" width="1" height="2.7" fill="#9c9c9c"/><rect x="792" y="77.3" width="1" height="2.7" fill="#9c9c9c"/><rect x="795" y="77.3" width="1" height="2.7" fill="#9c9c9c"/><rect x="797" y="70" width="1" height="10" fill="#b4b4b4"/><rect x="800" y="77.3" width="1" height="2.7" fill="#9c9c9c"/><rect x="802" y="77.3" width="1" height="2.7" fill="#9c9c9c"/><rect x="805" y="77.3" width="1" height="2.7" fill="#9c9c9c"/><rect x="807" y="77.3" width="1" height="2.7" fill="#9c9c9c"/><rect x="810" y="76" width="1" height="4" fill="#a8a8a8"/><rect x="812" y="77.3" width="1" height="2.7" fill="#9c9c9c"/><rect x="814" y="77.3" width="1" height="2.7" fill="#9c9c9c"/><rect x="817" y="77.3" width="1" height="2.7" fill="#9c9c9c"/><rect x="819" y="77.3" width="1" height="2.7" fill="#9c9c9c"/><rect x="822" y="70" width="1" height="10" fill="#b4b4b4"/><rect x="824" y="77.3" width="1" height="2.7" fill="#9c9c9c"/><rect x="827" y="77.3" width="1" height="2.7" fill="#9c9c9c"/><rect x="829" y="77.3" width="1" height="2.7" fill="#9c9c9c"/><rect x="832" y="77.3" width="1" height="2.7" fill="#9c9c9c"/><rect x="834" y="76" width="1" height="4" fill="#a8a8a8"/><rect x="837" y="77.3" width="1" height="2.7" fill="#9c9c9c"/><rect x="839" y="77.3" width="1" height="2.7" fill="#9c9c9c"/><rect x="842" y="77.3" width="1" height="2.7" fill="#9c9c9c"/><rect x="844" y="77.3" width="1" height="2.7" fill="#9c9c9c"/><rect x="847" y="70" width="1" height="10" fill="#b4b4b4"/><rect x="849" y="77.3" width="1" height="2.7" fill="#9c9c9c"/><rect x="852" y="77.3" width="1" height="2.7" fill="#9c9c9c"/><rect x="854" y="77.3" width="1" height="2.7" fill="#9c9c9c"/><rect x="856" y="77.3" width="1" height="2.7" fill="#9c9c9c"/><rect x="859" y="76" width="1" height="4" fill="#a8a8a8"/><rect x="861" y="77.3" width="1" height="2.7" fill="#9c9c9c"/><rect x="864" y="77.3" width="1" height="2.7" fill="#9c9c9c"/><rect x="866" y="77.3" width="1" height="2.7" fill="#9c9c9c"/><rect x="869" y="77.3" width="1" height="2.7" fill="#9c9c9c"/><rect x="871" y="70" width="1" height="10" fill="#b4b4b4"/><rect x="874" y="77.3" width="1" height="2.7" fill="#9c9c9c"/><rect x="876" y="77.3" width="1" height="2.7" fill="#9c9c9c"/><rect x="879" y="77.3" width="1" height="2.7" fill="#9c9c9c"/><rect x="881" y="77.3" width="1" height="2.7" fill="#9c9c9c"/><rect x="884" y="76" width="1" height="4" fill="#a8a8a8"/><rect x="886" y="77.3" width="1" height="2.7" fill="#9c9c9c"/><rect x="889" y="77.3" width="1" height="2.7" fill="#9c9c9c"/><rect x="891" y="77.3" width="1" height="2.7" fill="#9c9c9c"/><rect x="894" y="77.3" width="1" height="2.7" fill="#9c9c9c"/><rect x="896" y="70" width="1" height="10" fill="#b4b4b4"/><rect x="898" y="77.3" width="1" height="2.7" fill="#9c9c9c"/><rect x="901" y="77.3" width="1" height="2.7" fill="#9c9c9c"/><rect x="903" y="77.3" width="1" height="2.7" fill="#9c9c9c"/><rect x="906" y="77.3" width="1" height="2.7" fill="#9c9c9c"/><rect x="908" y="76" width="1" height="4" fill="#a8a8a8"/><rect x="911" y="77.3" width="1" height="2.7" fill="#9c9c9c"/><rect x="913" y="77.3" width="1" height="2.7" fill="#9c9c9c"/><rect x="916" y="77.3" width="1" height="2.7" fill="#9c9c9c"/><rect x="918" y="77.3" width="1" height="2.7" fill="#9c9c9c"/><rect x="921" y="70" width="1" height="10" fill="#b4b4b4"/><rect x="923" y="77.3" width="1" height="2.7" fill="#9c9c9c"/><rect x="926" y="77.3" width="1" height="2.7" fill="#9c9c9c"/><rect x="928" y="77.3" width="1" height="2.7" fill="#9c9c9c"/><rect x="38" y="79.3" width="893" height="0.8" fill="#aaa"/></svg>
<div class="t" style="left:57.70px;top:70.65px;font-size:5.3px;color:#d0d0d0;font-weight:normal;font-family:'Liberation Sans',sans-serif;transform:scaleX(1.000);">-100</div>
<div class="t" style="left:82.40px;top:70.65px;font-size:5.3px;color:#d0d0d0;font-weight:normal;font-family:'Liberation Sans',sans-serif;transform:scaleX(1.000);">0</div>
<div class="t" style="left:107.10px;top:70.65px;font-size:5.3px;color:#d0d0d0;font-weight:normal;font-family:'Liberation Sans',sans-serif;transform:scaleX(1.000);">100</div>
<div class="t" style="left:131.80px;top:70.65px;font-size:5.3px;color:#d0d0d0;font-weight:normal;font-family:'Liberation Sans',sans-serif;transform:scaleX(1.000);">200</div>
<div class="t" style="left:156.50px;top:70.65px;font-size:5.3px;color:#d0d0d0;font-weight:normal;font-family:'Liberation Sans',sans-serif;transform:scaleX(1.000);">300</div>
<div class="t" style="left:181.20px;top:70.65px;font-size:5.3px;color:#d0d0d0;font-weight:normal;font-family:'Liberation Sans',sans-serif;transform:scaleX(1.000);">400</div>
<div class="t" style="left:205.90px;top:70.65px;font-size:5.3px;color:#d0d0d0;font-weight:normal;font-family:'Liberation Sans',sans-serif;transform:scaleX(1.000);">500</div>
<div class="t" style="left:230.60px;top:70.65px;font-size:5.3px;color:#d0d0d0;font-weight:normal;font-family:'Liberation Sans',sans-serif;transform:scaleX(1.000);">600</div>
<div class="t" style="left:255.30px;top:70.65px;font-size:5.3px;color:#d0d0d0;font-weight:normal;font-family:'Liberation Sans',sans-serif;transform:scaleX(1.000);">700</div>
<div class="t" style="left:280.00px;top:70.65px;font-size:5.3px;color:#d0d0d0;font-weight:normal;font-family:'Liberation Sans',sans-serif;transform:scaleX(1.000);">800</div>
<div class="t" style="left:304.70px;top:70.65px;font-size:5.3px;color:#d0d0d0;font-weight:normal;font-family:'Liberation Sans',sans-serif;transform:scaleX(1.000);">900</div>
<div class="t" style="left:329.40px;top:70.65px;font-size:5.3px;color:#d0d0d0;font-weight:normal;font-family:'Liberation Sans',sans-serif;transform:scaleX(1.000);">1000</div>
<div class="t" style="left:354.10px;top:70.65px;font-size:5.3px;color:#d0d0d0;font-weight:normal;font-family:'Liberation Sans',sans-serif;transform:scaleX(1.000);">1100</div>
<div class="t" style="left:378.80px;top:70.65px;font-size:5.3px;color:#d0d0d0;font-weight:normal;font-family:'Liberation Sans',sans-serif;transform:scaleX(1.000);">1200</div>
<div class="t" style="left:403.50px;top:70.65px;font-size:5.3px;color:#d0d0d0;font-weight:normal;font-family:'Liberation Sans',sans-serif;transform:scaleX(1.000);">1300</div>
<div class="t" style="left:428.20px;top:70.65px;font-size:5.3px;color:#d0d0d0;font-weight:normal;font-family:'Liberation Sans',sans-serif;transform:scaleX(1.000);">1400</div>
<div class="t" style="left:452.90px;top:70.65px;font-size:5.3px;color:#d0d0d0;font-weight:normal;font-family:'Liberation Sans',sans-serif;transform:scaleX(1.000);">1500</div>
<div class="t" style="left:477.60px;top:70.65px;font-size:5.3px;color:#d0d0d0;font-weight:normal;font-family:'Liberation Sans',sans-serif;transform:scaleX(1.000);">1600</div>
<div class="t" style="left:502.30px;top:70.65px;font-size:5.3px;color:#d0d0d0;font-weight:normal;font-family:'Liberation Sans',sans-serif;transform:scaleX(1.000);">1700</div>
<div class="t" style="left:527.00px;top:70.65px;font-size:5.3px;color:#d0d0d0;font-weight:normal;font-family:'Liberation Sans',sans-serif;transform:scaleX(1.000);">1800</div>
<div class="t" style="left:551.70px;top:70.65px;font-size:5.3px;color:#d0d0d0;font-weight:normal;font-family:'Liberation Sans',sans-serif;transform:scaleX(1.000);">1900</div>
<div class="t" style="left:576.40px;top:70.65px;font-size:5.3px;color:#d0d0d0;font-weight:normal;font-family:'Liberation Sans',sans-serif;transform:scaleX(1.000);">2000</div>
<div class="t" style="left:601.10px;top:70.65px;font-size:5.3px;color:#d0d0d0;font-weight:normal;font-family:'Liberation Sans',sans-serif;transform:scaleX(1.000);">2100</div>
<div class="t" style="left:625.80px;top:70.65px;font-size:5.3px;color:#d0d0d0;font-weight:normal;font-family:'Liberation Sans',sans-serif;transform:scaleX(1.000);">2200</div>
<div class="t" style="left:650.50px;top:70.65px;font-size:5.3px;color:#d0d0d0;font-weight:normal;font-family:'Liberation Sans',sans-serif;transform:scaleX(1.000);">2300</div>
<div class="t" style="left:675.20px;top:70.65px;font-size:5.3px;color:#d0d0d0;font-weight:normal;font-family:'Liberation Sans',sans-serif;transform:scaleX(1.000);">2400</div>
<div class="t" style="left:699.90px;top:70.65px;font-size:5.3px;color:#d0d0d0;font-weight:normal;font-family:'Liberation Sans',sans-serif;transform:scaleX(1.000);">2500</div>
<div class="t" style="left:724.60px;top:70.65px;font-size:5.3px;color:#d0d0d0;font-weight:normal;font-family:'Liberation Sans',sans-serif;transform:scaleX(1.000);">2600</div>
<div class="t" style="left:749.30px;top:70.65px;font-size:5.3px;color:#d0d0d0;font-weight:normal;font-family:'Liberation Sans',sans-serif;transform:scaleX(1.000);">2700</div>
<div class="t" style="left:774.00px;top:70.65px;font-size:5.3px;color:#d0d0d0;font-weight:normal;font-family:'Liberation Sans',sans-serif;transform:scaleX(1.000);">2800</div>
<div class="t" style="left:798.70px;top:70.65px;font-size:5.3px;color:#d0d0d0;font-weight:normal;font-family:'Liberation Sans',sans-serif;transform:scaleX(1.000);">2900</div>
<div class="t" style="left:823.40px;top:70.65px;font-size:5.3px;color:#d0d0d0;font-weight:normal;font-family:'Liberation Sans',sans-serif;transform:scaleX(1.000);">3000</div>
<div class="t" style="left:848.10px;top:70.65px;font-size:5.3px;color:#d0d0d0;font-weight:normal;font-family:'Liberation Sans',sans-serif;transform:scaleX(1.000);">3100</div>
<div class="t" style="left:872.80px;top:70.65px;font-size:5.3px;color:#d0d0d0;font-weight:normal;font-family:'Liberation Sans',sans-serif;transform:scaleX(1.000);">3200</div>
<div class="t" style="left:897.50px;top:70.65px;font-size:5.3px;color:#d0d0d0;font-weight:normal;font-family:'Liberation Sans',sans-serif;transform:scaleX(1.000);">3300</div>
<div class="t" style="left:922.20px;top:70.65px;font-size:5.3px;color:#d0d0d0;font-weight:normal;font-family:'Liberation Sans',sans-serif;transform:scaleX(1.000);">340</div>
<div class="t" style="left:27.90px;top:71.73px;font-size:5.65px;color:#aabbd0;font-weight:normal;font-family:'Liberation Sans',sans-serif;transform:scaleX(0.859);">300</div>
<div class="t" style="left:38.30px;top:70.65px;font-size:5.3px;color:#d0d0d0;font-weight:normal;font-family:'Liberation Sans',sans-serif;transform:scaleX(1.000);">00</div>
<svg style="left:0;top:0" width="100" height="470"><rect x="35.5" y="82" width="2.5" height="1" fill="#a0a0a0"/><rect x="35.5" y="84" width="2.5" height="1" fill="#a0a0a0"/><rect x="33" y="86" width="5" height="1" fill="#a8a8a8"/><rect x="35.5" y="89" width="2.5" height="1" fill="#a0a0a0"/><rect x="35.5" y="91" width="2.5" height="1" fill="#a0a0a0"/><rect x="35.5" y="94" width="2.5" height="1" fill="#a0a0a0"/><rect x="35.5" y="96" width="2.5" height="1" fill="#a0a0a0"/><rect x="28" y="99" width="10" height="1" fill="#b0b0b0"/><rect x="35.5" y="101" width="2.5" height="1" fill="#a0a0a0"/><rect x="35.5" y="104" width="2.5" height="1" fill="#a0a0a0"/><rect x="35.5" y="106" width="2.5" height="1" fill="#a0a0a0"/><rect x="35.5" y="109" width="2.5" height="1" fill="#a0a0a0"/><rect x="33" y="111" width="5" height="1" fill="#a8a8a8"/><rect x="35.5" y="114" width="2.5" height="1" fill="#a0a0a0"/><rect x="35.5" y="116" width="2.5" height="1" fill="#a0a0a0"/><rect x="35.5" y="119" width="2.5" height="1" fill="#a0a0a0"/><rect x="35.5" y="121" width="2.5" height="1" fill="#a0a0a0"/><rect x="28" y="124" width="10" height="1" fill="#b0b0b0"/><rect x="35.5" y="126" width="2.5" height="1" fill="#a0a0a0"/><rect x="35.5" y="128" width="2.5" height="1" fill="#a0a0a0"/><rect x="35.5" y="131" width="2.5" height="1" fill="#a0a0a0"/><rect x="35.5" y="133" width="2.5" height="1" fill="#a0a0a0"/><rect x="33" y="136" width="5" height="1" fill="#a8a8a8"/><rect x="35.5" y="138" width="2.5" height="1" fill="#a0a0a0"/><rect x="35.5" y="141" width="2.5" height="1" fill="#a0a0a0"/><rect x="35.5" y="143" width="2.5" height="1" fill="#a0a0a0"/><rect x="35.5" y="146" width="2.5" height="1" fill="#a0a0a0"/><rect x="28" y="148" width="10" height="1" fill="#b0b0b0"/><rect x="35.5" y="151" width="2.5" height="1" fill="#a0a0a0"/><rect x="35.5" y="153" width="2.5" height="1" fill="#a0a0a0"/><rect x="35.5" y="156" width="2.5" height="1" fill="#a0a0a0"/><rect x="35.5" y="158" width="2.5" height="1" fill="#a0a0a0"/><rect x="33" y="161" width="5" height="1" fill="#a8a8a8"/><rect x="35.5" y="163" width="2.5" height="1" fill="#a0a0a0"/><rect x="35.5" y="165" width="2.5" height="1" fill="#a0a0a0"/><rect x="35.5" y="168" width="2.5" height="1" fill="#a0a0a0"/><rect x="35.5" y="170" width="2.5" height="1" fill="#a0a0a0"/><rect x="28" y="173" width="10" height="1" fill="#b0b0b0"/><rect x="35.5" y="175" width="2.5" height="1" fill="#a0a0a0"/><rect x="35.5" y="178" width="2.5" height="1" fill="#a0a0a0"/><rect x="35.5" y="180" width="2.5" height="1" fill="#a0a0a0"/><rect x="35.5" y="183" width="2.5" height="1" fill="#a0a0a0"/><rect x="33" y="185" width="5" height="1" fill="#a8a8a8"/><rect x="35.5" y="188" width="2.5" height="1" fill="#a0a0a0"/><rect x="35.5" y="190" width="2.5" height="1" fill="#a0a0a0"/><rect x="35.5" y="193" width="2.5" height="1" fill="#a0a0a0"/><rect x="35.5" y="195" width="2.5" height="1" fill="#a0a0a0"/><rect x="28" y="198" width="10" height="1" fill="#b0b0b0"/><rect x="35.5" y="200" width="2.5" height="1" fill="#a0a0a0"/><rect x="35.5" y="203" width="2.5" height="1" fill="#a0a0a0"/><rect x="35.5" y="205" width="2.5" height="1" fill="#a0a0a0"/><rect x="35.5" y="207" width="2.5" height="1" fill="#a0a0a0"/><rect x="33" y="210" width="5" height="1" fill="#a8a8a8"/><rect x="35.5" y="212" width="2.5" height="1" fill="#a0a0a0"/><rect x="35.5" y="215" width="2.5" height="1" fill="#a0a0a0"/><rect x="35.5" y="217" width="2.5" height="1" fill="#a0a0a0"/><rect x="35.5" y="220" width="2.5" height="1" fill="#a0a0a0"/><rect x="28" y="222" width="10" height="1" fill="#b0b0b0"/><rect x="35.5" y="225" width="2.5" height="1" fill="#a0a0a0"/><rect x="35.5" y="227" width="2.5" height="1" fill="#a0a0a0"/><rect x="35.5" y="230" width="2.5" height="1" fill="#a0a0a0"/><rect x="35.5" y="232" width="2.5" height="1" fill="#a0a0a0"/><rect x="33" y="235" width="5" height="1" fill="#a8a8a8"/><rect x="35.5" y="237" width="2.5" height="1" fill="#a0a0a0"/><rect x="35.5" y="240" width="2.5" height="1" fill="#a0a0a0"/><rect x="35.5" y="242" width="2.5" height="1" fill="#a0a0a0"/><rect x="35.5" y="245" width="2.5" height="1" fill="#a0a0a0"/><rect x="28" y="247" width="10" height="1" fill="#b0b0b0"/><rect x="35.5" y="249" width="2.5" height="1" fill="#a0a0a0"/><rect x="35.5" y="252" width="2.5" height="1" fill="#a0a0a0"/><rect x="35.5" y="254" width="2.5" height="1" fill="#a0a0a0"/><rect x="35.5" y="257" width="2.5" height="1" fill="#a0a0a0"/><rect x="33" y="259" width="5" height="1" fill="#a8a8a8"/><rect x="35.5" y="262" width="2.5" height="1" fill="#a0a0a0"/><rect x="35.5" y="264" width="2.5" height="1" fill="#a0a0a0"/><rect x="35.5" y="267" width="2.5" height="1" fill="#a0a0a0"/><rect x="35.5" y="269" width="2.5" height="1" fill="#a0a0a0"/><rect x="28" y="272" width="10" height="1" fill="#b0b0b0"/><rect x="35.5" y="274" width="2.5" height="1" fill="#a0a0a0"/><rect x="35.5" y="277" width="2.5" height="1" fill="#a0a0a0"/><rect x="35.5" y="279" width="2.5" height="1" fill="#a0a0a0"/><rect x="35.5" y="282" width="2.5" height="1" fill="#a0a0a0"/><rect x="33" y="284" width="5" height="1" fill="#a8a8a8"/><rect x="35.5" y="287" width="2.5" height="1" fill="#a0a0a0"/><rect x="35.5" y="289" width="2.5" height="1" fill="#a0a0a0"/><rect x="35.5" y="291" width="2.5" height="1" fill="#a0a0a0"/><rect x="35.5" y="294" width="2.5" height="1" fill="#a0a0a0"/><rect x="28" y="296" width="10" height="1" fill="#b0b0b0"/><rect x="35.5" y="299" width="2.5" height="1" fill="#a0a0a0"/><rect x="35.5" y="301" width="2.5" height="1" fill="#a0a0a0"/><rect x="35.5" y="304" width="2.5" height="1" fill="#a0a0a0"/><rect x="35.5" y="306" width="2.5" height="1" fill="#a0a0a0"/><rect x="33" y="309" width="5" height="1" fill="#a8a8a8"/><rect x="35.5" y="311" width="2.5" height="1" fill="#a0a0a0"/><rect x="35.5" y="314" width="2.5" height="1" fill="#a0a0a0"/><rect x="35.5" y="316" width="2.5" height="1" fill="#a0a0a0"/><rect x="35.5" y="319" width="2.5" height="1" fill="#a0a0a0"/><rect x="28" y="321" width="10" height="1" fill="#b0b0b0"/><rect x="35.5" y="324" width="2.5" height="1" fill="#a0a0a0"/><rect x="35.5" y="326" width="2.5" height="1" fill="#a0a0a0"/><rect x="35.5" y="329" width="2.5" height="1" fill="#a0a0a0"/><rect x="35.5" y="331" width="2.5" height="1" fill="#a0a0a0"/><rect x="33" y="333" width="5" height="1" fill="#a8a8a8"/><rect x="35.5" y="336" width="2.5" height="1" fill="#a0a0a0"/><rect x="35.5" y="338" width="2.5" height="1" fill="#a0a0a0"/><rect x="35.5" y="341" width="2.5" height="1" fill="#a0a0a0"/><rect x="35.5" y="343" width="2.5" height="1" fill="#a0a0a0"/><rect x="28" y="346" width="10" height="1" fill="#b0b0b0"/><rect x="35.5" y="348" width="2.5" height="1" fill="#a0a0a0"/><rect x="35.5" y="351" width="2.5" height="1" fill="#a0a0a0"/><rect x="35.5" y="353" width="2.5" height="1" fill="#a0a0a0"/><rect x="35.5" y="356" width="2.5" height="1" fill="#a0a0a0"/><rect x="33" y="358" width="5" height="1" fill="#a8a8a8"/><rect x="35.5" y="361" width="2.5" height="1" fill="#a0a0a0"/><rect x="35.5" y="363" width="2.5" height="1" fill="#a0a0a0"/><rect x="35.5" y="366" width="2.5" height="1" fill="#a0a0a0"/><rect x="35.5" y="368" width="2.5" height="1" fill="#a0a0a0"/><rect x="28" y="371" width="10" height="1" fill="#b0b0b0"/><rect x="35.5" y="373" width="2.5" height="1" fill="#a0a0a0"/><rect x="35.5" y="375" width="2.5" height="1" fill="#a0a0a0"/><rect x="35.5" y="378" width="2.5" height="1" fill="#a0a0a0"/><rect x="35.5" y="380" width="2.5" height="1" fill="#a0a0a0"/><rect x="33" y="383" width="5" height="1" fill="#a8a8a8"/><rect x="35.5" y="385" width="2.5" height="1" fill="#a0a0a0"/><rect x="35.5" y="388" width="2.5" height="1" fill="#a0a0a0"/><rect x="35.5" y="390" width="2.5" height="1" fill="#a0a0a0"/><rect x="35.5" y="393" width="2.5" height="1" fill="#a0a0a0"/><rect x="28" y="395" width="10" height="1" fill="#b0b0b0"/><rect x="35.5" y="398" width="2.5" height="1" fill="#a0a0a0"/><rect x="35.5" y="400" width="2.5" height="1" fill="#a0a0a0"/><rect x="35.5" y="403" width="2.5" height="1" fill="#a0a0a0"/><rect x="35.5" y="405" width="2.5" height="1" fill="#a0a0a0"/><rect x="33" y="408" width="5" height="1" fill="#a8a8a8"/><rect x="35.5" y="410" width="2.5" height="1" fill="#a0a0a0"/><rect x="35.5" y="412" width="2.5" height="1" fill="#a0a0a0"/><rect x="35.5" y="415" width="2.5" height="1" fill="#a0a0a0"/><rect x="35.5" y="417" width="2.5" height="1" fill="#a0a0a0"/><rect x="28" y="420" width="10" height="1" fill="#b0b0b0"/><rect x="35.5" y="422" width="2.5" height="1" fill="#a0a0a0"/><rect x="35.5" y="425" width="2.5" height="1" fill="#a0a0a0"/><rect x="35.5" y="427" width="2.5" height="1" fill="#a0a0a0"/><rect x="35.5" y="430" width="2.5" height="1" fill="#a0a0a0"/><rect x="33" y="432" width="5" height="1" fill="#a8a8a8"/><rect x="35.5" y="435" width="2.5" height="1" fill="#a0a0a0"/><rect x="35.5" y="437" width="2.5" height="1" fill="#a0a0a0"/><rect x="35.5" y="440" width="2.5" height="1" fill="#a0a0a0"/><rect x="35.5" y="442" width="2.5" height="1" fill="#a0a0a0"/><rect x="28" y="445" width="10" height="1" fill="#b0b0b0"/><rect x="35.5" y="447" width="2.5" height="1" fill="#a0a0a0"/><rect x="35.5" y="450" width="2.5" height="1" fill="#a0a0a0"/><rect x="35.5" y="452" width="2.5" height="1" fill="#a0a0a0"/><rect x="35.5" y="454" width="2.5" height="1" fill="#a0a0a0"/><rect x="33" y="457" width="5" height="1" fill="#a8a8a8"/><rect x="35.5" y="459" width="2.5" height="1" fill="#a0a0a0"/><rect x="37" y="80" width="0.8" height="383" fill="#8a8a8a"/></svg>
<div class="t" style="left:28.3px;top:104.75px;font-size:5.3px;color:#b8c4d0;transform:rotate(-90deg);transform-origin:0 0;">0</div>
<div class="t" style="left:28.3px;top:135.34px;font-size:5.3px;color:#b8c4d0;transform:rotate(-90deg);transform-origin:0 0;">100</div>
<div class="t" style="left:28.3px;top:160.04px;font-size:5.3px;color:#b8c4d0;transform:rotate(-90deg);transform-origin:0 0;">200</div>
<div class="t" style="left:28.3px;top:184.74px;font-size:5.3px;color:#b8c4d0;transform:rotate(-90deg);transform-origin:0 0;">300</div>
<div class="t" style="left:28.3px;top:209.44px;font-size:5.3px;color:#b8c4d0;transform:rotate(-90deg);transform-origin:0 0;">400</div>
<div class="t" style="left:28.3px;top:234.14px;font-size:5.3px;color:#b8c4d0;transform:rotate(-90deg);transform-origin:0 0;">500</div>
<div class="t" style="left:28.3px;top:258.84px;font-size:5.3px;color:#b8c4d0;transform:rotate(-90deg);transform-origin:0 0;">600</div>
<div class="t" style="left:28.3px;top:283.54px;font-size:5.3px;color:#b8c4d0;transform:rotate(-90deg);transform-origin:0 0;">700</div>
<div class="t" style="left:28.3px;top:308.24px;font-size:5.3px;color:#b8c4d0;transform:rotate(-90deg);transform-origin:0 0;">800</div>
<div class="t" style="left:28.3px;top:332.94px;font-size:5.3px;color:#b8c4d0;transform:rotate(-90deg);transform-origin:0 0;">900</div>
<div class="t" style="left:28.3px;top:360.59px;font-size:5.3px;color:#b8c4d0;transform:rotate(-90deg);transform-origin:0 0;">1000</div>
<div class="t" style="left:28.3px;top:384.90px;font-size:5.3px;color:#b8c4d0;transform:rotate(-90deg);transform-origin:0 0;">1100</div>
<div class="t" style="left:28.3px;top:409.99px;font-size:5.3px;color:#b8c4d0;transform:rotate(-90deg);transform-origin:0 0;">1200</div>
<div class="t" style="left:28.3px;top:434.69px;font-size:5.3px;color:#b8c4d0;transform:rotate(-90deg);transform-origin:0 0;">1300</div>
<div class="t" style="left:28.3px;top:459.39px;font-size:5.3px;color:#b8c4d0;transform:rotate(-90deg);transform-origin:0 0;">1400</div>
<div class="t" style="left:28.3px;top:87px;font-size:5.3px;color:#b8c4d0;transform:rotate(-90deg);transform-origin:0 0;">-100</div>
<div style="position:absolute;left:7.3px;top:64.3px;width:16px;height:16.5px;background:#2f2f2f;border:1px solid #474747;border-radius:2px;"></div>
<svg style="left:8.5px;top:66px" width="14" height="13" viewBox="0 0 14 13"><path d="M0.5 0.8 L8.5 3.6 L5.4 5.2 L3.6 8.5 Z" fill="#f4f4f4"/><path d="M4.5 4.5 L7.5 7.5" stroke="#f4f4f4" stroke-width="1.4"/><path d="M10.5 5.5 V12.5 M7 9 H14" stroke="#f0c419" stroke-width="1.7"/><path d="M10.5 4.5 L9 6.2 H12 Z M10.5 13.5 L9 11.8 H12 Z M6 9 L7.7 7.5 V10.5 Z M15 9 L13.3 7.5 V10.5 Z" fill="#f0c419"/></svg>
<svg style="left:10px;top:86px" width="12" height="12" viewBox="0 0 12 12"><circle cx="5" cy="5" r="3.9" fill="none" stroke="#eee" stroke-width="1.1"/><path d="M3.2 5 H6.8 M5 3.2 V6.8" stroke="#f0c419" stroke-width="1.2"/><path d="M8 8 L10 10" stroke="#f0c419" stroke-width="1.2"/></svg>
<svg style="left:10px;top:105px" width="12" height="12" viewBox="0 0 12 12"><circle cx="5" cy="5" r="3.9" fill="none" stroke="#eee" stroke-width="1.1"/><path d="M3.2 5 H6.8" stroke="#f0c419" stroke-width="1.2"/><path d="M8 8 L10 10" stroke="#f0c419" stroke-width="1.2"/></svg>
<svg style="left:10px;top:125px" width="12" height="12" viewBox="0 0 12 12"><path d="M3 0.5 V9 H11.5 M0.5 3 H9 V11.5" stroke="#eee" stroke-width="1.4" fill="none"/></svg>
<div style="position:absolute;left:8px;top:143px;width:15px;height:0.8px;background:repeating-linear-gradient(90deg,#777 0 1.2px,transparent 1.2px 2.4px);"></div>
<div style="position:absolute;left:10px;top:154px;width:11px;height:1.3px;background:#eee;"></div>
<svg style="left:10px;top:170px" width="11" height="8" viewBox="0 0 11 8"><rect x="0.6" y="0.6" width="9.8" height="6.8" fill="none" stroke="#eee" stroke-width="1.2"/></svg>
<svg style="left:10px;top:190px" width="11" height="8" viewBox="0 0 11 8"><ellipse cx="5.5" cy="4" rx="4.8" ry="3.3" fill="none" stroke="#eee" stroke-width="1.2"/></svg>
<svg style="left:11.5px;top:208px" width="10" height="11" viewBox="0 0 10 11"><path d="M0.3 0.3 H9.7 V3.2 H8.9 Q8.6 1.6 7 1.6 H6 V9.2 L7.3 9.8 V10.5 H2.7 V9.8 L4 9.2 V1.6 H3 Q1.4 1.6 1.1 3.2 H0.3 Z" fill="#eeeeee"/></svg>
<svg style="left:9.5px;top:226.5px" width="12" height="13" viewBox="0 0 12 13"><path d="M3.2 8.3 L10 1.5" stroke="#f39c12" stroke-width="2.8"/><path d="M9 0.8 L11 2.8" stroke="#f0c419" stroke-width="2"/><path d="M1.6 10 L2.4 7.4 L4.2 9.2 Z" fill="#f0c419"/><rect x="0.5" y="11" width="11" height="1.1" fill="#ddd"/></svg>
<div style="position:absolute;left:9.5px;top:246.8px;width:13px;height:10.5px;border:1px solid #b08a20;background:#3a3a3a;"></div>
<svg style="left:11.5px;top:248px" width="9" height="7" viewBox="0 0 9 7"><rect x="0.5" y="0.5" width="2" height="6" fill="#eee"/><rect x="3.5" y="0.5" width="2" height="6" fill="#eee"/><rect x="6.5" y="0.5" width="2" height="6" fill="#eee"/></svg>
<div style="position:absolute;left:78.0px;top:96.7px;width:3px;height:3px;background:#d4d4d4;"></div>
<div style="position:absolute;left:126.4px;top:96.7px;width:3px;height:3px;background:#d4d4d4;"></div>
<div style="position:absolute;left:175.1px;top:96.7px;width:3px;height:3px;background:#d4d4d4;"></div>
<div style="position:absolute;left:78.0px;top:129.7px;width:3px;height:3px;background:#d4d4d4;"></div>
<div style="position:absolute;left:78.0px;top:162.6px;width:3px;height:3px;background:#d4d4d4;"></div>
<div style="position:absolute;left:175.1px;top:129.7px;width:3px;height:3px;background:#000;border-radius:50%;"></div>
<div style="position:absolute;left:126.4px;top:162.6px;width:3px;height:3px;background:#000;border-radius:50%;"></div>
<div style="position:absolute;left:175.1px;top:162.6px;width:3px;height:3px;background:#000;border-radius:50%;"></div>
<svg style="left:88.7px;top:145.1px" width="34.3" height="11.6" viewBox="0 0 100 36" preserveAspectRatio="none"><rect x="0" y="0" width="51" height="36" fill="#080808"/><rect x="2" y="2" width="6" height="5" fill="#bbb"/><rect x="26" y="4" width="20" height="3" fill="#555"/><ellipse cx="18" cy="14" rx="5" ry="3.5" fill="#ddd"/><ellipse cx="31" cy="13" rx="4" ry="3" fill="#bbb"/><ellipse cx="40" cy="16" rx="5" ry="4" fill="#999"/><ellipse cx="24" cy="22" rx="4" ry="3" fill="#777"/><ellipse cx="38" cy="25" rx="3" ry="3" fill="#888"/><rect x="27" y="26" width="4" height="5" fill="#eee"/><rect x="35" y="27" width="4" height="5" fill="#ddd"/><rect x="44" y="18" width="5" height="6" fill="#aaa"/><defs><linearGradient id="sky" x1="0" y1="0" x2="0" y2="1"><stop offset="0" stop-color="#1a78e0"/><stop offset="1" stop-color="#58c8e8"/></linearGradient><linearGradient id="gr" x1="0" y1="0" x2="0" y2="1"><stop offset="0" stop-color="#5aa030"/><stop offset="0.5" stop-color="#2a5a10"/><stop offset="1" stop-color="#6a8a10"/></linearGradient></defs><rect x="51" y="0" width="49" height="15" fill="url(#sky)"/><rect x="51" y="14" width="49" height="22" fill="url(#gr)"/><path d="M51 29 H100 V32 H51 Z" fill="#8aa020" opacity="0.6"/><path d="M86 1 L99 7" stroke="#e8f4ff" stroke-width="2.5"/></svg>
<svg style="left:928.5px;top:357.3px" width="12.5" height="26" viewBox="0 0 12.5 26"><path d="M1.5 0 H12.5 V25.6 L2 19.2 Q0 18 0 16 V1.5 Q0 0 1.5 0 Z" fill="#fafafa"/><rect x="2" y="2.7" width="10.5" height="10.7" fill="#1a8cf0"/><ellipse cx="7.2" cy="8" rx="3.9" ry="3.6" fill="#fff"/><path d="M4.2 8 H10.2" stroke="#1a8cf0" stroke-width="1"/><path d="M3.6 8 L5.4 6.4 V9.6 Z M10.8 8 L9 6.4 V9.6 Z" fill="#1a8cf0"/></svg>
<div style="position:absolute;left:935px;top:143px;width:0.8px;height:4px;background:#777;"></div>
<div style="position:absolute;left:936.6px;top:143px;width:0.8px;height:4px;background:#777;"></div>
<div style="position:absolute;left:935px;top:73px;width:1px;height:1px;background:#ccc;"></div>
<div style="position:absolute;left:26px;top:462.6px;width:322px;height:28.1px;background:#3a3a3a;border-top:1px solid #2e2e2e;border-right:1px solid #1f2626;"></div>
<div style="position:absolute;left:29px;top:465px;width:12px;height:10px;background:#404040;"></div>
<div style="position:absolute;left:29px;top:478px;width:12px;height:10px;background:#404040;"></div>
<div class="t" style="left:31.50px;top:466.73px;font-size:8.14px;color:#5e5e5e;font-weight:normal;font-family:'Liberation Sans',sans-serif;transform:scaleX(0.910);">X:</div>
<div class="t" style="left:31.50px;top:479.93px;font-size:8.14px;color:#5e5e5e;font-weight:normal;font-family:'Liberation Sans',sans-serif;transform:scaleX(0.967);">Y:</div>
<div style="position:absolute;left:43.3px;top:465px;width:29.700000000000003px;height:10px;background:#efefef;border:1px solid #d0d0d0;"></div>
<div class="t" style="left:45.70px;top:466.33px;font-size:8.14px;color:#6c727c;font-weight:normal;font-family:'Liberation Sans',sans-serif;transform:scaleX(0.953);">0.00</div>
<div style="position:absolute;left:43.3px;top:478.4px;width:29.700000000000003px;height:9.800000000000011px;background:#efefef;border:1px solid #d0d0d0;"></div>
<div class="t" style="left:45.70px;top:479.63px;font-size:8.14px;color:#6c727c;font-weight:normal;font-family:'Liberation Sans',sans-serif;transform:scaleX(0.953);">0.00</div>
<div style="position:absolute;left:75.5px;top:465px;width:13px;height:10px;background:#404040;"></div>
<div style="position:absolute;left:75.5px;top:478px;width:13px;height:10px;background:#404040;"></div>
<div class="t" style="left:77.00px;top:466.73px;font-size:8.14px;color:#5e5e5e;font-weight:normal;font-family:'Liberation Sans',sans-serif;transform:scaleX(1.072);">W:</div>
<div class="t" style="left:78.00px;top:479.93px;font-size:8.14px;color:#5e5e5e;font-weight:normal;font-family:'Liberation Sans',sans-serif;transform:scaleX(1.044);">H:</div>
<div style="position:absolute;left:90px;top:465px;width:29.700000000000003px;height:10px;background:#efefef;border:1px solid #d0d0d0;"></div>
<div class="t" style="left:92.40px;top:466.33px;font-size:8.14px;color:#6c727c;font-weight:normal;font-family:'Liberation Sans',sans-serif;transform:scaleX(0.964);">381.00</div>
<div style="position:absolute;left:90px;top:478.4px;width:29.700000000000003px;height:9.800000000000011px;background:#efefef;border:1px solid #d0d0d0;"></div>
<div class="t" style="left:92.40px;top:479.63px;font-size:8.14px;color:#6c727c;font-weight:normal;font-family:'Liberation Sans',sans-serif;transform:scaleX(0.964);">254.00</div>
<svg style="left:122px;top:468.5px" width="8" height="12" viewBox="0 0 8 12"><rect x="3.2" y="0.6" width="3.2" height="6" rx="1.6" transform="rotate(25 4.8 3.6)" fill="none" stroke="#c8c8c8" stroke-width="0.9"/><rect x="1.6" y="5.2" width="3.2" height="6" rx="1.6" transform="rotate(25 3.2 8.2)" fill="none" stroke="#c8c8c8" stroke-width="0.9"/></svg>
<div style="position:absolute;left:136.5px;top:465px;width:44px;height:10px;background:#404040;"></div>
<div style="position:absolute;left:136.5px;top:478px;width:44px;height:10px;background:#404040;"></div>
<div class="t" style="left:137.30px;top:466.73px;font-size:8.14px;color:#5a5a5a;font-weight:normal;font-family:'Liberation Sans',sans-serif;transform:scaleX(0.870);">Horz-Spread:</div>
<div class="t" style="left:137.30px;top:479.93px;font-size:8.14px;color:#5a5a5a;font-weight:normal;font-family:'Liberation Sans',sans-serif;transform:scaleX(0.921);">Vert-Spread:</div>
<div style="position:absolute;left:181px;top:465px;width:29px;height:10px;background:#efefef;border:1px solid #d0d0d0;"></div>
<div class="t" style="left:183.40px;top:466.33px;font-size:8.14px;color:#6c727c;font-weight:normal;font-family:'Liberation Sans',sans-serif;transform:scaleX(1.016);">0</div>
<div style="position:absolute;left:181px;top:478.4px;width:29px;height:9.800000000000011px;background:#efefef;border:1px solid #d0d0d0;"></div>
<div class="t" style="left:183.40px;top:479.63px;font-size:8.14px;color:#6c727c;font-weight:normal;font-family:'Liberation Sans',sans-serif;transform:scaleX(1.016);">0</div>
<svg style="left:217.5px;top:469px" width="13" height="12" viewBox="0 0 13 12"><rect x="0" y="0.5" width="12.5" height="0.9" fill="#ddd"/><rect x="0" y="2.8" width="12.5" height="0.9" fill="#ddd"/><rect x="0" y="5.1" width="12.5" height="0.9" fill="#ddd"/><rect x="0" y="7.4" width="12.5" height="0.9" fill="#ddd"/><rect x="0" y="9.7" width="12.5" height="0.9" fill="#ddd"/><rect x="9.5" y="2.8" width="3" height="0.9" fill="#f0c419"/><rect x="0" y="5.1" width="2.5" height="0.9" fill="#6c3"/><rect x="9.5" y="7.4" width="3" height="0.9" fill="#e74"/><rect x="9.5" y="9.7" width="3" height="0.9" fill="#f0c419"/></svg>
<svg style="left:0;top:0" width="946" height="518">
<g fill="none" stroke="#a8a8a8" stroke-width="0.8">
<path d="M240.4 465.8 V474.8"/><rect x="241.2" y="471.3" width="7.6" height="2.2"/>
<path d="M257 465.8 V474.8"/><rect x="252.8" y="471.3" width="8.6" height="2.2"/>
<path d="M274.6 465.8 V474.8"/><rect x="266.2" y="471.3" width="7.6" height="2.2"/>
<path d="M280 466 H289.5"/><rect x="281.2" y="466.4" width="3.4" height="8.4"/>
<rect x="294.6" y="466" width="3.2" height="9" rx="0.8"/><path d="M293.6 470.5 H303"/>
<rect x="308.2" y="466" width="3" height="8.2"/><path d="M307.4 474.6 H316.6"/>
<path d="M321.5 465.5 H328.5 L331 468 V476 H321.5 Z" />
<path d="M335 465.5 H342 L344.5 468 V476 H335 Z" />
<rect x="294.4" y="480.4" width="5.8" height="6.4"/>
<rect x="309.8" y="479" width="6" height="5.6"/>
<path d="M321.2 478 V487.6 M330.8 478 V487.6"/><rect x="322.6" y="483.4" width="7.2" height="2.4"/>
<path d="M335 478.2 H344.4 M335 487.4 H344.4"/><rect x="340" y="479.2" width="3" height="7.6"/>
<path d="M270.4 479.4 L266 486.2 H270.4 Z"/>
<path d="M282 483.2 L288.4 483.2 L282 487.6 Z"/>
</g>
<g fill="#c9a227">
<rect x="241.2" y="467" width="4.6" height="3"/>
<rect x="254.4" y="467" width="5.4" height="3"/>
<rect x="269.4" y="467" width="4.6" height="3"/>
<rect x="285.6" y="467" width="3" height="4.6"/>
<rect x="299" y="467.4" width="3" height="5.8"/>
<rect x="312.2" y="469" width="3.2" height="4.6"/>
<rect x="324.6" y="467.6" width="3" height="5.6"/>
<rect x="337.2" y="469" width="5" height="3"/>
<rect x="323.6" y="479.6" width="3.6" height="2.8"/>
<rect x="336.2" y="482.2" width="3" height="4.6"/>
<path d="M270.8 479.4 L276 486.2 H270.8 Z"/>
<path d="M282 477.6 L288.4 482.8 L282 482.8 Z"/>
</g>
<g fill="none" stroke="#c9a227">
<path d="M246.8 487.2 V483.2 Q246.8 481.6 245.2 481.6 H241" stroke-width="1.5"/>
<path d="M242.6 479.6 L240.4 481.6 L242.6 483.6" stroke-width="1.3"/>
<path d="M253.6 487.2 V483.2 Q253.6 481.6 255.2 481.6 H259.4" stroke-width="1.5"/>
<path d="M257.8 479.6 L260 481.6 L257.8 483.6" stroke-width="1.3"/>
<rect x="297.2" y="479.2" width="5" height="5.8" stroke-width="1.2"/>
<path d="M310 481.6 H308.6 V486.8 H313.4 V485.2" stroke-width="1.2"/>
</g>
<g stroke="#ddd" stroke-width="0.7" fill="none">
<path d="M322.6 470.5 H324.4 M327.8 470.5 H329.8"/>
<path d="M339.7 466.8 V468.8 M339.7 472.2 V474.4"/>
</g>
</svg>
<div style="position:absolute;left:81px;top:490.7px;width:267px;height:1.3px;background:#a9b1b1;"></div>
<div style="position:absolute;left:30.5px;top:495.5px;width:1.2px;height:1.2px;background:#999;"></div>
<div style="position:absolute;left:927px;top:495px;width:1.6px;height:2px;background:#aaa;"></div>
<div style="position:absolute;left:931px;top:492px;width:10px;height:8px;background:#363636;"></div>
<div style="position:absolute;left:935px;top:487.2px;width:1.8px;height:1.6px;background:#bbb;"></div>
<div class="t" style="left:5.50px;top:503.97px;font-size:5.76px;color:#e6e6e6;font-weight:normal;font-family:'Liberation Sans',sans-serif;transform:scaleX(0.972);">Default printer: Hosonsoft-GEN5-32B#</div>
<div class="t" style="left:425.70px;top:503.97px;font-size:5.76px;color:#e6e6e6;font-weight:normal;font-family:'Liberation Sans',sans-serif;transform:scaleX(0.966);">Print status: Ready</div>
<div class="t" style="left:493.30px;top:503.97px;font-size:5.76px;color:#e6e6e6;font-weight:normal;font-family:'Liberation Sans',sans-serif;transform:scaleX(0.966);">Shape Total Count:1</div>
<div class="t" style="left:589.50px;top:503.97px;font-size:5.76px;color:#e6e6e6;font-weight:normal;font-family:'Liberation Sans',sans-serif;transform:scaleX(0.935);">Fetzer_P95_Regular_Acrylic_First_Surface_white behind images.tif</div>
<div class="t" style="left:842.40px;top:503.97px;font-size:5.76px;color:#e6e6e6;font-weight:normal;font-family:'Liberation Sans',sans-serif;transform:scaleX(0.893);">XY(1482.82, 280)</div>
<div class="t" style="left:919.70px;top:503.97px;font-size:5.76px;color:#e6e6e6;font-weight:normal;font-family:'Liberation Sans',sans-serif;transform:scaleX(0.815);">148%</div>
<div style="position:absolute;left:297px;top:130px;width:352px;height:258px;background:#f0f0f0;border:1px solid #cacaca;box-shadow:1px 2px 6px 1px rgba(0,0,0,0.2);"></div>
<div style="position:absolute;left:298px;top:131px;width:350px;height:12px;background:#fff;"></div>
<div class="t" style="left:299.90px;top:132.87px;font-size:7.01px;color:#9a9a9a;font-weight:normal;font-family:'Liberation Sans',sans-serif;transform:scaleX(0.840);">Print</div>
<svg style="left:637.5px;top:133.5px" width="6" height="6" viewBox="0 0 6 6"><path d="M0.3 0.3 L5.7 5.7 M5.7 0.3 L0.3 5.7" stroke="#a0a0a0" stroke-width="0.7"/></svg>
<div style="position:absolute;left:303px;top:150.8px;width:200.5px;height:79.6px;border:1px solid #dcdcdc;"></div>
<div class="t" style="left:311.80px;top:161.77px;font-size:7.01px;color:#333;font-weight:normal;font-family:'Liberation Sans',sans-serif;transform:scaleX(0.686);">Solution:</div>
<div class="t" style="left:311.80px;top:179.17px;font-size:7.01px;color:#333;font-weight:normal;font-family:'Liberation Sans',sans-serif;transform:scaleX(0.744);">Color Order:</div>
<div class="t" style="left:311.80px;top:196.87px;font-size:7.01px;color:#333;font-weight:normal;font-family:'Liberation Sans',sans-serif;transform:scaleX(0.788);">Send type:</div>
<div class="t" style="left:311.80px;top:215.07px;font-size:7.01px;color:#333;font-weight:normal;font-family:'Liberation Sans',sans-serif;transform:scaleX(0.781);">Rename:</div>
<div style="position:absolute;left:345.2px;top:159.8px;width:120px;height:10px;background:#e5e5e5;border:1px solid #c6c6c6;"></div>
<div class="t" style="left:346.80px;top:161.07px;font-size:7.01px;color:#333;font-weight:normal;font-family:'Liberation Sans',sans-serif;transform:scaleX(0.747);">new_32b_720x1200_8Pass_6C_2Bit</div>
<svg style="left:458.8px;top:163.8px" width="4" height="2.4" viewBox="0 0 4 2.4"><path d="M0.3 0.3 L2 2 L3.7 0.3" stroke="#555" stroke-width="0.7" fill="none"/></svg>
<div style="position:absolute;left:469px;top:160px;width:30px;height:10.5px;background:#e1e1e1;border:1px solid #c6c6c6;"></div>
<div class="t" style="left:473.20px;top:161.57px;font-size:7.01px;color:#333;font-weight:normal;font-family:'Liberation Sans',sans-serif;transform:scaleX(0.799);">Advance</div>
<div style="position:absolute;left:345.2px;top:177.7px;width:154.5px;height:10.8px;background:#fff;border:1px solid #a0a0a0;"></div>
<div class="t" style="left:347.50px;top:179.27px;font-size:7.01px;color:#333;font-weight:normal;font-family:'Liberation Sans',sans-serif;transform:scaleX(0.717);">KCMYLcLm+Spot Color</div>
<div style="position:absolute;left:345.2px;top:196.3px;width:154.5px;height:10.4px;background:#e5e5e5;border:1px solid #c6c6c6;"></div>
<div class="t" style="left:346.80px;top:197.57px;font-size:7.01px;color:#333;font-weight:normal;font-family:'Liberation Sans',sans-serif;transform:scaleX(0.761);">File</div>
<div style="position:absolute;left:345.2px;top:214.2px;width:154.5px;height:10px;background:#e5e5e5;border:1px solid #c6c6c6;"></div>
<div class="t" style="left:346.80px;top:215.37px;font-size:7.01px;color:#333;font-weight:normal;font-family:'Liberation Sans',sans-serif;transform:scaleX(0.783);">Custom</div>
<div style="position:absolute;left:303px;top:240.6px;width:200.2px;height:124.2px;border:1px solid #dcdcdc;"></div>
<div style="position:absolute;left:306.5px;top:237px;width:35px;height:8px;background:#f0f0f0;"></div>
<div class="t" style="left:307.60px;top:237.07px;font-size:7.01px;color:#333;font-weight:normal;font-family:'Liberation Sans',sans-serif;transform:scaleX(0.794);">Output option</div>
<div style="position:absolute;left:311.4px;top:249.79999999999998px;width:7px;height:7px;background:#fff;border:1px solid #8c8c8c;border-radius:0.5px;"></div>
<div class="t" style="left:318.50px;top:249.37px;font-size:7.01px;color:#333;font-weight:normal;font-family:'Liberation Sans',sans-serif;transform:scaleX(0.724);">Horizontal mirror</div>
<div style="position:absolute;left:311.4px;top:261.5px;width:7px;height:7px;background:#fff;border:1px solid #8c8c8c;border-radius:0.5px;"></div>
<div class="t" style="left:318.50px;top:261.07px;font-size:7.01px;color:#333;font-weight:normal;font-family:'Liberation Sans',sans-serif;transform:scaleX(0.763);">Vertical mirror</div>
<div style="position:absolute;left:311.4px;top:273.2px;width:7px;height:7px;background:#fff;border:1px solid #8c8c8c;border-radius:0.5px;"></div>
<div class="t" style="left:318.50px;top:272.77px;font-size:7.01px;color:#333;font-weight:normal;font-family:'Liberation Sans',sans-serif;transform:scaleX(0.750);">Absolute coordinate</div>
<div style="position:absolute;left:311.4px;top:284.9px;width:7px;height:7px;background:#fff;border:1px solid #8c8c8c;border-radius:0.5px;"></div>
<div class="t" style="left:318.50px;top:284.47px;font-size:7.01px;color:#333;font-weight:normal;font-family:'Liberation Sans',sans-serif;transform:scaleX(0.768);">Multiple print</div>
<div style="position:absolute;left:311.4px;top:296.59999999999997px;width:7px;height:7px;background:#fff;border:1px solid #8c8c8c;border-radius:0.5px;"></div>
<div class="t" style="left:318.50px;top:296.17px;font-size:7.01px;color:#333;font-weight:normal;font-family:'Liberation Sans',sans-serif;transform:scaleX(0.744);">Print frame</div>
<div style="position:absolute;left:311.4px;top:308.3px;width:7px;height:7px;background:#fff;border:1px solid #8c8c8c;border-radius:0.5px;"></div>
<div class="t" style="left:318.50px;top:307.87px;font-size:7.01px;color:#333;font-weight:normal;font-family:'Liberation Sans',sans-serif;transform:scaleX(0.754);">Generate JPG Previe</div>
<div style="position:absolute;left:311.4px;top:320.0px;width:7px;height:7px;background:#fff;border:1px solid #8c8c8c;border-radius:0.5px;"></div>
<svg style="left:312.5px;top:321.1px" width="4.5" height="4.5" viewBox="0 0 4.5 4.5"><path d="M0.4 2.3 L1.7 3.6 L4.1 0.6" stroke="#333" stroke-width="0.7" fill="none"/></svg>
<div class="t" style="left:318.50px;top:319.57px;font-size:7.01px;color:#333;font-weight:normal;font-family:'Liberation Sans',sans-serif;transform:scaleX(0.732);">Forward output</div>
<div style="position:absolute;left:311.4px;top:331.7px;width:7px;height:7px;background:#fff;border:1px solid #8c8c8c;border-radius:0.5px;"></div>
<div class="t" style="left:318.50px;top:331.27px;font-size:7.01px;color:#333;font-weight:normal;font-family:'Liberation Sans',sans-serif;transform:scaleX(0.749);">Print image outline</div>
<div style="position:absolute;left:378px;top:283px;width:10.8px;height:10px;background:#e1e1e1;border:1px solid #cfcfcf;"></div>
<div style="position:absolute;left:378px;top:295px;width:10.8px;height:10px;background:#e1e1e1;border:1px solid #cfcfcf;"></div>
<div class="t" style="left:382.20px;top:287.47px;font-size:4.52px;color:#888;font-weight:normal;font-family:'Liberation Sans',sans-serif;transform:scaleX(0.916);">..</div>
<div class="t" style="left:382.20px;top:299.47px;font-size:4.52px;color:#888;font-weight:normal;font-family:'Liberation Sans',sans-serif;transform:scaleX(0.916);">..</div>
<div style="position:absolute;left:509.8px;top:148px;width:134.2px;height:215px;border:1px solid #c9c9c9;background:#f0f0f0;"></div>
<div style="position:absolute;left:511.8px;top:220px;width:128.5px;height:85.4px;background:#fff;"></div>
<div style="position:absolute;left:512.5px;top:155px;width:129px;height:0.8px;background:#666;"></div>
<div style="position:absolute;left:512.3px;top:150.5px;width:0.8px;height:9px;background:#555;"></div>
<div style="position:absolute;left:640.6px;top:150px;width:0.8px;height:10px;background:#555;"></div>
<div style="position:absolute;left:562px;top:151px;width:28.5px;height:8px;background:#f0f0f0;"></div>
<div class="t" style="left:562.70px;top:152.31px;font-size:6px;color:#222;font-weight:normal;font-family:'Liberation Serif',serif;transform:scaleX(0.991);">381.00 mm</div>
<div style="position:absolute;left:547.8px;top:166px;width:1.8px;height:1.8px;background:#e00;border-radius:50%;"></div>
<svg style="left:524.2px;top:283px" width="45.3" height="15.7" viewBox="0 0 100 36" preserveAspectRatio="none"><rect x="0" y="0" width="51" height="36" fill="#080808"/><rect x="2" y="2" width="6" height="5" fill="#bbb"/><rect x="26" y="4" width="20" height="3" fill="#555"/><ellipse cx="18" cy="14" rx="5" ry="3.5" fill="#ddd"/><ellipse cx="31" cy="13" rx="4" ry="3" fill="#bbb"/><ellipse cx="40" cy="16" rx="5" ry="4" fill="#999"/><ellipse cx="24" cy="22" rx="4" ry="3" fill="#777"/><ellipse cx="38" cy="25" rx="3" ry="3" fill="#888"/><rect x="27" y="26" width="4" height="5" fill="#eee"/><rect x="35" y="27" width="4" height="5" fill="#ddd"/><rect x="44" y="18" width="5" height="6" fill="#aaa"/><defs><linearGradient id="sky" x1="0" y1="0" x2="0" y2="1"><stop offset="0" stop-color="#1a78e0"/><stop offset="1" stop-color="#58c8e8"/></linearGradient><linearGradient id="gr" x1="0" y1="0" x2="0" y2="1"><stop offset="0" stop-color="#5aa030"/><stop offset="0.5" stop-color="#2a5a10"/><stop offset="1" stop-color="#6a8a10"/></linearGradient></defs><rect x="51" y="0" width="49" height="15" fill="url(#sky)"/><rect x="51" y="14" width="49" height="22" fill="url(#gr)"/><path d="M51 29 H100 V32 H51 Z" fill="#8aa020" opacity="0.6"/><path d="M86 1 L99 7" stroke="#e8f4ff" stroke-width="2.5"/></svg>
<div style="position:absolute;left:304.3px;top:371.8px;width:35.5px;height:10.2px;background:#e1e1e1;border:1px solid #c6c6c6;"></div>
<div class="t" style="left:312.00px;top:373.07px;font-size:7.01px;color:#333;font-weight:normal;font-family:'Liberation Sans',sans-serif;transform:scaleX(0.863);">Canvas</div>
<div style="position:absolute;left:361.1px;top:371.8px;width:35.69999999999999px;height:10.2px;background:#e1e1e1;border:1px solid #c6c6c6;"></div>
<div class="t" style="left:372.50px;top:373.07px;font-size:7.01px;color:#333;font-weight:normal;font-family:'Liberation Sans',sans-serif;transform:scaleX(0.937);">Print</div>
<div style="position:absolute;left:407.4px;top:371.8px;width:35.400000000000034px;height:10.2px;background:#e1e1e1;border:1px solid #c6c6c6;"></div>
<div class="t" style="left:416.00px;top:373.07px;font-size:7.01px;color:#333;font-weight:normal;font-family:'Liberation Sans',sans-serif;transform:scaleX(0.802);">Cancel</div>
<div style="position:absolute;left:401.4px;top:179.6px;width:144px;height:159px;background:#f0f0f0;border:1px solid #b8b8b8;box-shadow:1px 2px 5px 1px rgba(0,0,0,0.25);"></div>
<div style="position:absolute;left:402.4px;top:180.6px;width:142px;height:11.4px;background:#fff;"></div>
<div class="t" style="left:403.40px;top:182.87px;font-size:7.01px;color:#333;font-weight:normal;font-family:'Liberation Sans',sans-serif;transform:scaleX(0.821);">Advance</div>
<svg style="left:534.5px;top:183.5px" width="5.5" height="5.5" viewBox="0 0 5.5 5.5"><path d="M0.3 0.3 L5.2 5.2 M5.2 0.3 L0.3 5.2" stroke="#222" stroke-width="0.8"/></svg>
<div style="position:absolute;left:406.8px;top:198.2px;width:132.6px;height:105.6px;border:1px solid #dcdcdc;"></div>
<div class="t" style="left:415.00px;top:205.27px;font-size:7.01px;color:#333;font-weight:normal;font-family:'Liberation Sans',sans-serif;transform:scaleX(0.741);">Color mode:</div>
<div style="position:absolute;left:451px;top:204.1px;width:75.5px;height:9.6px;background:#cccccc;border:1px solid #c4c4c4;"></div>
<div class="t" style="left:452.20px;top:205.27px;font-size:7.01px;color:#8a8a8a;font-weight:normal;font-family:'Liberation Sans',sans-serif;transform:scaleX(0.671);">CMYKLcLm</div>
<svg style="left:519.5px;top:208px" width="5" height="3" viewBox="0 0 5 3"><path d="M0.3 0.3 L2.5 2.5 L4.7 0.3" stroke="#9a9a9a" stroke-width="0.6" fill="none"/></svg>
<div class="t" style="left:421.80px;top:218.17px;font-size:7.01px;color:#333;font-weight:normal;font-family:'Liberation Sans',sans-serif;transform:scaleX(0.699);">Precision:</div>
<div style="position:absolute;left:451px;top:217.0px;width:75.5px;height:9.6px;background:#cccccc;border:1px solid #c4c4c4;"></div>
<div class="t" style="left:452.20px;top:218.17px;font-size:7.01px;color:#8a8a8a;font-weight:normal;font-family:'Liberation Sans',sans-serif;transform:scaleX(0.753);">720 X 1200</div>
<svg style="left:519.5px;top:220.9px" width="5" height="3" viewBox="0 0 5 3"><path d="M0.3 0.3 L2.5 2.5 L4.7 0.3" stroke="#9a9a9a" stroke-width="0.6" fill="none"/></svg>
<div class="t" style="left:420.50px;top:231.37px;font-size:7.01px;color:#333;font-weight:normal;font-family:'Liberation Sans',sans-serif;transform:scaleX(0.813);">Halftone:</div>
<div style="position:absolute;left:451px;top:230.2px;width:75.5px;height:9.6px;background:#cccccc;border:1px solid #c4c4c4;"></div>
<div class="t" style="left:452.20px;top:231.37px;font-size:7.01px;color:#8a8a8a;font-weight:normal;font-family:'Liberation Sans',sans-serif;transform:scaleX(0.685);">2BIT_KMPCS_UV</div>
<svg style="left:519.5px;top:234.1px" width="5" height="3" viewBox="0 0 5 3"><path d="M0.3 0.3 L2.5 2.5 L4.7 0.3" stroke="#9a9a9a" stroke-width="0.6" fill="none"/></svg>
<div class="t" style="left:429.50px;top:245.27px;font-size:7.01px;color:#333;font-weight:normal;font-family:'Liberation Sans',sans-serif;transform:scaleX(0.686);">PASS:</div>
<div style="position:absolute;left:451px;top:244.1px;width:75.5px;height:9.6px;background:#e5e5e5;border:1px solid #c6c6c6;"></div>
<div class="t" style="left:452.20px;top:245.27px;font-size:7.01px;color:#333;font-weight:normal;font-family:'Liberation Sans',sans-serif;transform:scaleX(0.718);">8</div>
<svg style="left:519.5px;top:248px" width="5" height="3" viewBox="0 0 5 3"><path d="M0.3 0.3 L2.5 2.5 L4.7 0.3" stroke="#9a9a9a" stroke-width="0.6" fill="none"/></svg>
<div class="t" style="left:414.30px;top:260.27px;font-size:7.01px;color:#333;font-weight:normal;font-family:'Liberation Sans',sans-serif;transform:scaleX(0.784);">Color order:</div>
<div style="position:absolute;left:450px;top:248.6px;width:81.8px;height:25.3px;border:3px solid #b20e10;"></div>
<div style="position:absolute;left:453px;top:258.7px;width:73.6px;height:10.4px;background:#e5f1fb;border:1px solid #4a98dc;box-shadow:inset 0 0 0 0.5px #9cc8ee;"></div>
<div class="t" style="left:474.00px;top:260.17px;font-size:7.01px;color:#333;font-weight:normal;font-family:'Liberation Sans',sans-serif;transform:scaleX(0.762);">CMYKLcLm</div>
<div class="t" style="left:421.00px;top:275.87px;font-size:7.01px;color:#333;font-weight:normal;font-family:'Liberation Sans',sans-serif;transform:scaleX(0.784);">Use ICC:</div>
<div style="position:absolute;left:451.4px;top:276.2px;width:7px;height:7px;background:#fff;border:1px solid #666;"></div>
<div style="position:absolute;left:468px;top:274.7px;width:58.9px;height:10.1px;background:#cccccc;border:1px solid #c4c4c4;"></div>
<div class="t" style="left:486.50px;top:276.18px;font-size:6.78px;color:#9a9a9a;font-weight:normal;font-family:'Liberation Sans',sans-serif;transform:scaleX(0.834);">Advance</div>
<div class="t" style="left:416.50px;top:290.17px;font-size:7.01px;color:#333;font-weight:normal;font-family:'Liberation Sans',sans-serif;transform:scaleX(0.800);">Black split:</div>
<div style="position:absolute;left:451.4px;top:290.5px;width:7px;height:7px;background:#fff;border:1px solid #999;"></div>
<svg style="left:452.6px;top:291.8px" width="4.8" height="4.5" viewBox="0 0 4.8 4.5"><path d="M0.4 2.3 L1.8 3.8 L4.3 0.6" stroke="#777" stroke-width="0.7" fill="none"/></svg>
<div style="position:absolute;left:435px;top:317.2px;width:35.5px;height:10.1px;background:#e1e1e1;border:1px solid #c6c6c6;"></div>
<div class="t" style="left:449.50px;top:318.57px;font-size:7.01px;color:#333;font-weight:normal;font-family:'Liberation Sans',sans-serif;transform:scaleX(0.726);">Ok</div>
<div style="position:absolute;left:475.1px;top:317.2px;width:35.4px;height:10.1px;background:#e1e1e1;border:1px solid #c6c6c6;"></div>
<div class="t" style="left:484.50px;top:318.57px;font-size:7.01px;color:#333;font-weight:normal;font-family:'Liberation Sans',sans-serif;transform:scaleX(0.756);">Cancel</div>
</body></html>
